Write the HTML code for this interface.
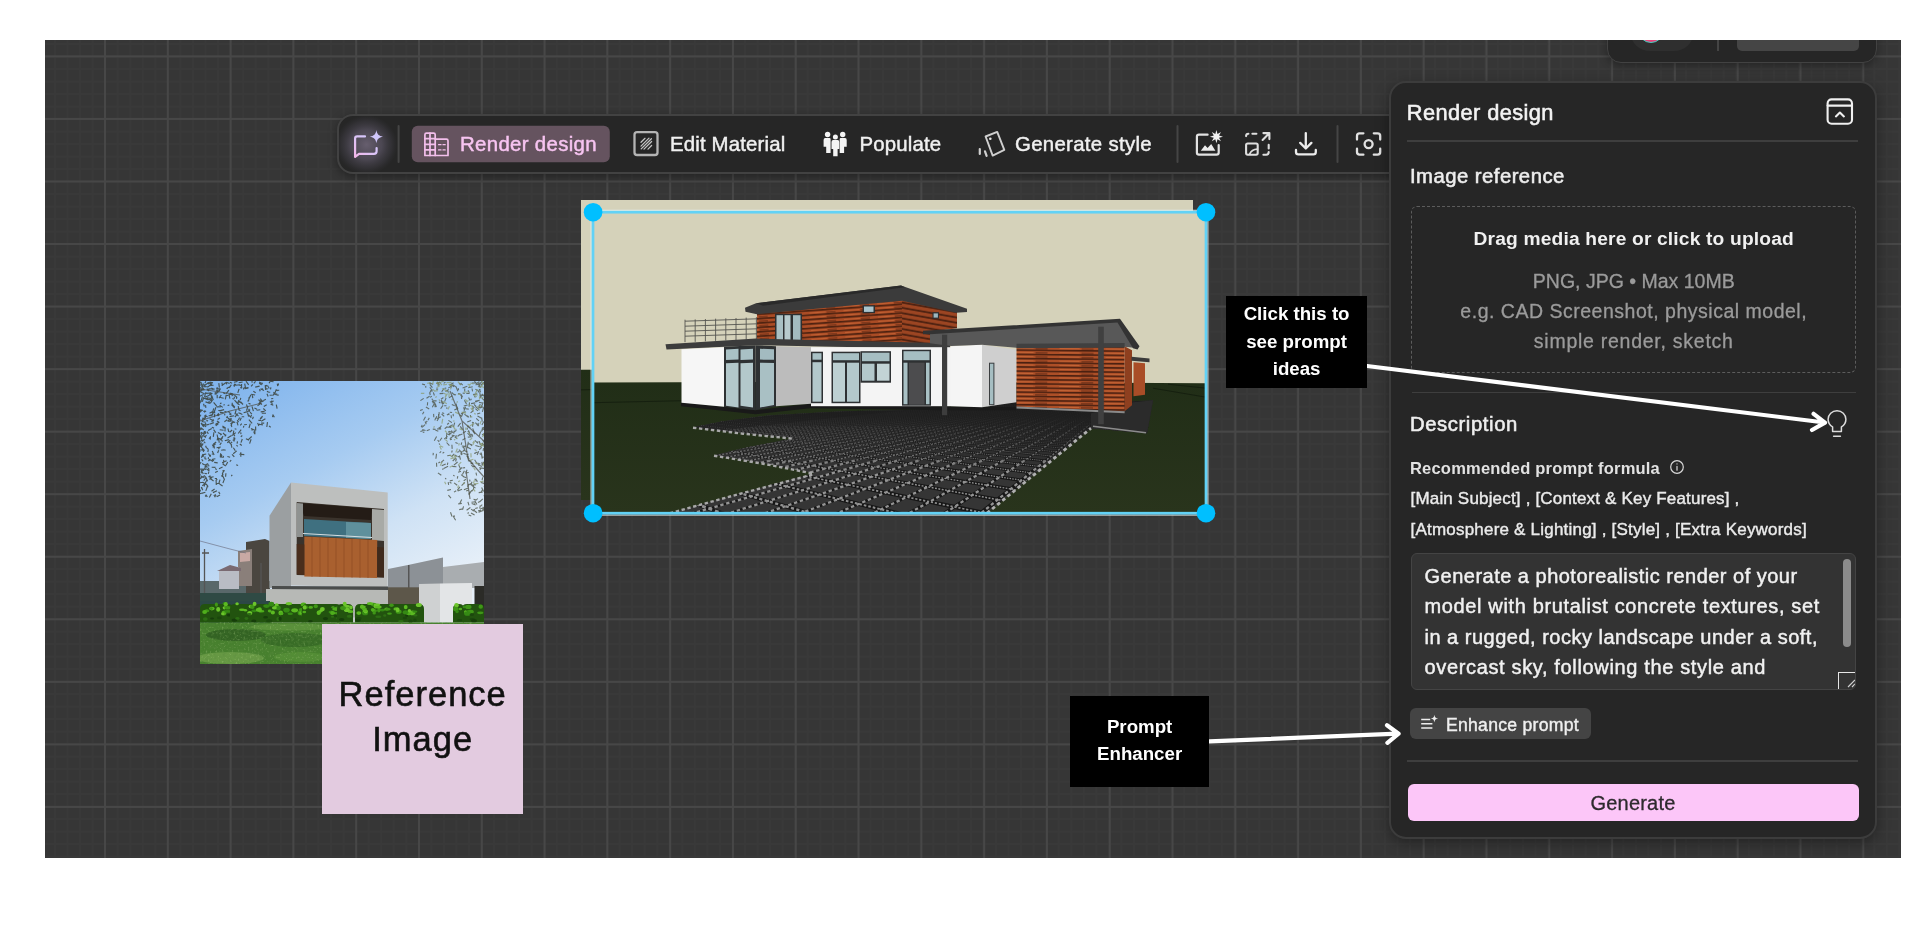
<!DOCTYPE html>
<html lang="en">
<head>
<meta charset="utf-8">
<title>Render design</title>
<style>
*{box-sizing:border-box;margin:0;padding:0}
html,body{width:1920px;height:936px;background:#fff;overflow:hidden}
body{font-family:"Liberation Sans",sans-serif;position:relative;color:#ececec}
#canvas{position:absolute;left:45px;top:40px;width:1856px;height:818px;background-color:#363636;overflow:hidden;opacity:.9999;
 background-image:
  linear-gradient(to right,#474747 0,#474747 2px,transparent 2px),
  linear-gradient(to bottom,#474747 0,#474747 2px,transparent 2px),
  linear-gradient(to right,#393939 0,#393939 1.6px,transparent 1.6px),
  linear-gradient(to bottom,#393939 0,#393939 1.6px,transparent 1.6px);
 background-size:62.8px 62.56px,62.8px 62.56px,12.56px 12.512px,12.56px 12.512px;
 background-position:59px 15.4px,59px 15.4px,59.2px 15.6px,59.2px 15.6px;}
.abs{position:absolute}
/* toolbar */
#toolbar{position:absolute;left:292px;top:73.5px;width:1100px;height:60px;background:#262626;border:2px solid #424242;border-radius:16px;box-shadow:0 3px 10px rgba(0,0,0,.35)}
.tlabel{position:absolute;font-size:20.4px;line-height:24px;white-space:nowrap;color:#f0f0f0;-webkit-text-stroke:.45px currentColor}
/* panel */
#panel{position:absolute;left:1344px;top:41px;width:488px;height:758px;background:#262626;border:2px solid #3c3c3c;border-radius:17px;box-shadow:0 4px 14px rgba(0,0,0,.35)}
.hr{position:absolute;height:1.5px;background:#3e3e3e}
.t{position:absolute;white-space:nowrap;line-height:1}
.med{-webkit-text-stroke:.4px currentColor}
.med2{-webkit-text-stroke:.55px currentColor}
.gr{left:20.5px;width:444.5px;text-align:center;font-size:19.5px;color:#9b9b9b;-webkit-text-stroke:.3px #9b9b9b}
.ta{left:13px;font-size:20px;color:#f1f1f1;-webkit-text-stroke:.45px #f1f1f1}
/* annotations */
.note{position:absolute;background:#000;color:#fff;font-weight:700;text-align:center;font-size:18.7px;line-height:27.2px}
#sticky{position:absolute;left:277.2px;top:584.1px;width:201px;height:189.8px;background:#e3cbe0;color:#111;text-align:center}
</style>
</head>
<body>
<div id="canvas">
  <!-- reference photo -->
  <svg id="photo" class="abs" style="left:155px;top:341px" width="284" height="283" viewBox="0 0 284 283">
<defs>
<linearGradient id="sky" x1="0.15" y1="0" x2="0.6" y2="0.85"><stop offset="0" stop-color="#82b5ed"/><stop offset=".4" stop-color="#a6cbf1"/><stop offset=".72" stop-color="#cfe2f5"/><stop offset="1" stop-color="#e6eff8"/></linearGradient>
<filter id="nz" x="0" y="0" width="100%" height="100%"><feTurbulence type="fractalNoise" baseFrequency=".35" numOctaves="2" seed="3"/><feColorMatrix values="0 0 0 0 0.1  0 0 0 0 0.25  0 0 0 0 0.05  0 0 0 -2.2 1.25"/></filter>
<filter id="nz2" x="0" y="0" width="100%" height="100%"><feTurbulence type="fractalNoise" baseFrequency=".5" numOctaves="2" seed="8"/><feColorMatrix values="0 0 0 0 0.75  0 0 0 0 0.95  0 0 0 0 0.45  0 0 0 -2.6 1.05"/></filter>
<clipPath id="phc"><rect width="284" height="283"/></clipPath>
</defs>
<g clip-path="url(#phc)">
<rect x="0.0" y="0.0" width="284.0" height="283.0" fill="url(#sky)"/>
<path d="M3.9 94.3l2.3 2.3 M24.1 68.8l1.5 0.5 M61.1 42.1l3.1 0.0 M49.0 19.6l-1.5 0.5 M0.3 55.1l0.8 2.1 M21.9 1.6l0.6 3.2 M9.0 19.8l0.3 2.5 M0.3 93.0l-0.9 1.9 M15.4 77.7l-2.9 0.6 M28.7 60.9l3.1 3.0 M21.3 14.0l-2.3 3.1 M18.3 42.8l-2.6 2.1 M19.7 48.8l3.9 0.5 M5.6 50.3l-2.5 2.2 M63.8 19.9l-3.5 0.5 M24.9 23.8l-1.5 0.2 M33.6 41.3l-3.2 1.4 M7.1 50.6l1.2 2.4 M31.6 65.2l0.2 1.6 M8.8 14.4l-3.9 1.8 M0.2 0.7l1.3 1.3 M39.5 32.0l2.9 1.6 M5.5 24.2l0.4 2.6 M26.1 1.3l0.5 2.1 M2.9 101.3l2.9 2.2 M59.1 1.1l3.6 1.8 M5.1 75.5l-0.3 2.2 M8.4 68.4l-0.6 2.6 M40.1 3.8l-4.5 0.5 M13.6 95.8l-4.0 0.8 M21.5 22.0l-1.5 0.6 M5.7 97.0l-2.0 2.6 M18.6 32.3l-1.6 2.6 M6.8 7.6l1.9 2.6 M14.8 97.5l2.2 0.1 M15.0 113.2l1.1 2.0 M16.1 99.0l0.2 4.9 M9.1 78.2l4.0 2.4 M7.9 82.6l-2.4 1.3 M15.9 26.2l-1.6 4.6 M66.9 10.4l1.5 0.5 M1.6 96.8l-2.3 1.4 M34.5 19.1l3.1 3.4 M11.7 86.3l3.8 0.1 M2.2 8.6l2.3 0.3 M5.5 20.9l4.4 1.5 M18.6 110.9l1.4 1.9 M26.4 7.3l1.5 0.2 M24.1 28.6l-4.7 1.3 M76.4 8.3l-1.8 4.6 M32.0 73.4l2.3 2.5 M13.6 21.4l3.1 3.8 M24.0 68.8l-2.8 0.5 M13.6 30.1l-4.1 2.1 M13.3 30.9l-0.9 3.5 M9.7 1.1l3.3 0.8 M1.5 5.1l2.6 3.4 M74.0 14.0l-4.4 0.2 M14.5 7.9l-2.4 0.6 M67.6 11.0l2.6 0.3 M6.0 42.1l-2.4 3.0 M10.2 4.3l-2.8 1.9 M19.9 31.4l3.8 0.3 M21.5 58.7l0.9 1.8 M3.5 22.7l0.9 2.8 M38.3 20.1l-0.3 3.2 M41.8 42.7l-1.6 1.7 M27.9 47.5l0.9 3.3 M41.6 3.0l-0.2 4.6 M5.1 83.5l2.2 3.3 M62.6 35.1l-2.4 2.6 M34.5 14.3l2.7 2.2 M52.8 3.3l-1.7 2.1 M29.6 13.2l4.9 0.6 M46.9 43.5l-2.8 0.3 M57.5 42.1l1.0 1.7 M37.2 39.2l1.4 1.9 M51.9 0.2l0.3 1.5 M39.8 63.0l2.0 1.5 M32.0 24.2l2.7 2.8 M32.2 49.0l-2.6 2.3 M19.0 25.4l-1.6 1.1 M51.7 55.5l-3.6 3.3 M4.0 50.1l1.8 2.7 M17.1 53.5l0.6 3.0 M13.5 38.2l-1.8 2.7 M41.7 35.7l2.5 0.0 M61.0 39.3l-2.6 0.1 M5.6 64.8l0.6 1.4 M19.4 41.3l-3.2 1.5 M27.7 80.9l-1.7 3.3 M20.8 66.0l-4.2 0.8 M37.7 32.6l-2.8 3.6 M32.1 12.0l0.2 3.1 M0.8 51.3l0.7 2.7 M42.6 1.0l-3.9 0.7 M20.4 73.5l1.8 1.4 M66.7 23.8l-2.9 1.7 M17.9 51.4l3.3 1.9 M38.1 19.9l3.7 2.2 M64.6 30.4l-3.9 0.5 M62.0 1.7l-1.0 2.4 M22.7 82.9l3.1 2.1 M5.4 111.3l-3.9 1.1 M37.8 23.0l1.8 0.8 M48.4 33.9l2.9 2.8 M48.7 27.7l1.0 3.1 M2.5 15.4l-1.4 4.4 M8.1 2.0l-4.1 2.7 M38.4 31.8l3.7 1.4 M2.4 38.3l0.8 1.9 M8.9 90.7l-0.6 2.2 M48.4 30.4l-4.8 1.4 M0.8 87.6l1.5 2.4 M69.9 0.8l-0.8 1.5 M18.7 9.9l-4.1 2.3 M0.5 4.0l2.4 0.3 M3.2 6.5l-1.7 3.7 M19.5 66.2l-1.0 2.1 M1.2 106.1l1.6 3.2 M33.5 52.7l1.3 2.6 M7.1 98.7l-2.0 3.5 M1.0 6.5l0.3 2.8 M78.2 2.4l0.3 1.9 M19.9 75.9l3.3 0.3 M2.2 88.0l2.8 0.3 M50.2 28.6l-3.5 2.6 M63.3 27.5l2.5 2.4 M15.2 31.4l-3.5 0.5 M2.7 68.9l-4.0 0.2 M5.0 34.9l2.6 0.8 M34.9 2.7l-1.2 2.3 M13.0 32.9l-2.3 2.3 M30.5 11.7l1.4 2.3 M1.4 112.2l-4.6 1.3 M30.3 59.3l-3.1 2.5 M51.6 33.9l-1.3 2.6 M5.5 11.6l-0.9 4.6 M6.3 39.6l1.8 0.3 M32.3 23.4l2.5 2.7 M30.6 5.4l-3.3 1.7 M5.8 96.2l1.8 4.1 M47.9 25.4l-1.4 4.3 M67.5 41.2l-0.7 4.8 M27.2 38.7l-2.8 2.1 M0.6 94.8l2.1 1.4 M46.0 0.2l2.7 3.7 M34.6 56.3l-0.6 4.3 M13.7 27.3l-0.9 3.3 M77.2 13.0l-4.1 0.1 M34.1 34.7l-4.5 0.9 M62.3 36.4l-2.2 1.7 M51.9 47.8l0.3 1.9 M16.9 40.0l2.1 1.2 M54.8 48.4l0.1 4.9 M48.5 6.5l-2.3 0.2 M0.3 22.1l-2.9 0.4 M31.3 32.3l-1.9 0.2 M32.9 40.6l2.3 0.9 M11.8 47.6l-3.8 1.8 M44.5 6.2l-1.3 2.2 M63.1 7.8l-2.1 0.6 M30.1 40.2l-2.5 0.1 M8.0 82.7l0.1 1.5 M76.3 23.6l0.8 4.1 M61.9 19.6l-1.8 2.3 M3.8 16.2l-1.5 4.6 M31.1 63.4l0.7 2.4 M46.4 23.6l1.3 2.9 M15.7 63.0l-3.7 1.4 M31.3 3.8l-2.1 3.1 M27.8 30.4l2.2 1.0 M2.1 54.8l-0.8 3.8 M8.6 16.6l-2.8 1.1 M0.0 1.1l-0.6 1.7 M8.5 72.5l1.7 3.2 M29.9 1.3l2.2 1.0 M1.7 78.2l1.3 2.1 M0.9 1.8l1.5 4.5 M40.8 21.0l2.2 2.5 M14.6 108.0l-3.1 2.2 M20.6 72.3l-0.3 3.5 M31.4 37.6l-1.4 3.1 M1.0 51.1l2.4 1.9 M32.3 21.8l-0.3 3.1 M20.5 7.6l-1.6 3.0 M32.2 93.8l-0.9 1.3 M13.7 72.7l-1.9 0.5 M65.9 18.3l-2.4 1.2 M67.0 12.7l1.1 2.8 M3.2 62.4l-2.2 3.7 M37.5 0.4l-3.6 0.9 M18.7 57.6l0.5 4.2 M37.0 40.9l1.0 3.5 M1.0 46.6l-0.9 1.2 M0.7 8.2l-0.1 2.7 M11.3 112.7l-2.0 3.8 M59.4 21.3l2.5 2.4 M17.1 12.6l-2.5 0.7 M66.0 32.2l-4.2 0.1 M1.1 42.3l2.6 3.5 M23.4 74.9l-0.1 1.7 M41.2 48.6l-3.0 3.9 M0.3 101.0l-1.8 1.1 M48.5 7.2l-3.8 0.4 M55.6 45.4l0.1 4.2 M49.2 16.0l-0.5 3.5 M18.5 8.0l2.1 0.5 M12.4 12.3l-4.1 2.5 M0.2 37.9l-3.2 3.5 M31.5 37.2l-4.0 2.9 M9.4 84.7l-2.1 0.3 M35.8 51.6l-3.8 2.9 M42.3 54.5l-1.5 1.2 M41.3 36.8l-1.4 2.9 M21.4 61.7l-1.6 2.1 M31.3 44.0l0.5 2.0 M19.9 37.0l-2.3 1.5 M4.7 58.2l-2.8 2.3 M50.0 31.1l1.9 2.0 M11.8 46.2l2.2 0.9 M7.0 88.2l2.4 1.8 M19.6 16.3l4.1 1.0 M1.1 81.0l-1.9 3.0 M3.7 54.7l2.1 1.9 M12.2 70.1l1.9 4.0 M8.5 76.2l-0.2 1.8 M60.2 17.6l2.7 3.4 M36.5 64.2l1.2 1.2 M60.3 28.8l-3.7 0.5 M2.7 95.2l1.6 1.6 M28.9 9.2l-2.7 3.5 M48.5 22.3l2.0 0.8 M53.4 35.8l-0.9 2.3 M40.8 71.3l-0.0 4.5 M11.3 7.1l3.2 1.4 M24.5 2.8l-2.9 1.8 M44.7 2.6l0.9 4.8 M36.7 15.7l-0.2 2.2 M17.3 98.3l-1.3 1.1 M69.0 45.1l1.7 1.1 M20.0 114.0l-3.3 1.8 M19.8 102.1l-3.4 0.7 M36.1 29.0l-1.2 4.3 M11.7 96.6l-2.2 1.9 M3.1 59.1l-2.6 0.8 M17.9 56.2l-0.8 3.1 M5.2 29.9l-1.9 0.6 M2.8 29.0l-4.2 2.7 M1.3 66.1l3.3 3.6 M32.7 59.0l2.0 0.5 M12.0 78.3l1.9 1.5 M26.6 79.8l-4.5 1.9 M59.6 5.1l-4.4 1.0 M3.9 43.2l-1.1 1.1 M14.2 81.4l3.5 0.5 M3.8 60.6l1.5 1.6 M1.0 109.8l-4.0 0.5 M8.2 105.8l-1.6 0.1 M10.2 56.4l-1.3 1.2 M59.1 2.1l2.0 1.5 M27.5 35.0l-1.0 1.9 M6.2 73.0l-2.9 0.6 M26.1 1.3l3.5 1.2 M47.6 31.9l1.0 3.8 M33.9 56.2l0.3 3.9 M25.9 92.2l-0.3 3.5 M13.8 62.9l0.6 4.6 M8.9 43.4l-3.8 0.9 M39.6 36.5l-1.2 2.5 M55.6 0.4l-1.8 1.9 M0.1 31.3l-3.6 2.8 M7.6 5.7l-3.8 0.1 M3.7 73.8l-0.8 2.2 M53.7 50.6l1.0 2.3 M21.8 53.2l-1.6 0.7 M7.1 106.4l-1.3 3.5 M9.6 37.7l4.4 2.3 M47.3 27.9l-0.8 1.4 M18.1 56.6l-0.1 2.6 M37.5 60.3l-0.4 2.4 M0.1 28.3l0.1 3.3 M8.9 7.5l-0.1 2.0 M0.0 4.1l-1.5 0.8 M0.1 54.6l1.5 0.1 M7.8 16.7l-0.4 2.3 M9.0 17.8l2.5 2.3 M24.4 30.6l2.1 0.1 M5.9 102.1l-3.7 2.7 M4.5 92.4l2.5 0.3 M16.2 61.0l-3.0 2.3 M3.3 16.9l4.5 1.7 M58.5 18.7l2.1 2.1 M9.9 1.9l2.2 1.6 M24.5 97.9l-1.6 4.2 M19.2 41.3l-3.9 2.3 M1.6 87.7l-0.5 4.7 M24.7 32.8l0.1 1.6 M3.6 13.5l-3.7 1.6 M4.6 45.0l1.6 0.7 M38.3 20.3l3.9 2.3 M13.8 41.6l-4.4 1.6 M6.5 54.2l-1.4 1.6 M17.0 109.8l-4.1 1.8 M16.0 9.1l2.4 0.3 M9.8 94.3l0.8 2.6 M0.9 107.0l1.8 0.0 M4.0 34.8l2.1 1.0 M13.9 51.3l-0.6 4.6 M31.9 42.0l-0.8 3.1 M29.3 33.3l2.2 0.5 M53.3 10.3l2.4 1.4 M0.9 33.8l-2.4 3.8 M2.1 67.8l1.7 3.1 M0.2 28.9l1.7 0.2 M17.8 57.2l2.6 0.6 M51.1 58.2l-1.5 4.4 M34.7 47.8l1.7 0.4 M6.1 30.1l-2.1 1.2 M13.6 48.6l2.2 3.0 M0.9 41.9l2.1 1.7 M42.3 58.0l-1.3 3.6 M14.7 32.8l-0.2 3.5 M65.4 37.8l-4.2 2.5 M9.6 78.9l-1.1 1.2 M28.9 58.6l-4.1 1.1 M33.8 49.7l-0.6 3.4 M51.1 13.3l4.0 0.7 M59.6 42.7l-1.3 2.2 M2.1 82.5l2.7 1.5 M76.4 14.0l2.3 0.1 M65.7 3.9l-0.1 5.0 M79.2 9.3l-2.7 0.1 M6.1 102.9l2.0 2.8 M22.4 45.1l3.1 1.9 M12.0 12.2l-1.9 0.1 M18.7 69.2l-1.1 2.8 M58.9 43.2l4.0 0.7 M2.4 36.9l2.6 1.7 M63.0 2.2l-3.1 0.2 M19.5 103.1l3.1 1.9 M6.1 84.8l-1.4 1.0 M71.5 19.7l0.8 4.5 M2.6 3.4l-3.1 0.7 M28.9 13.2l1.0 4.5 M51.0 47.4l4.4 2.2 M38.2 19.2l2.4 1.9 M65.7 7.6l2.0 0.3 M18.3 29.5l3.2 0.1 M23.8 80.2l-0.7 2.5 M52.3 14.1l0.5 3.1 M31.6 54.4l-4.1 2.5 M33.4 66.7l1.9 3.0 M25.2 48.2l-0.3 2.2 M9.5 16.7l3.0 2.9 M36.7 69.9l-3.5 2.8 M12.4 19.2l-2.2 3.1 M5.9 37.0l-3.6 0.5 M1.4 63.7l-1.6 2.0 M22.9 89.1l0.6 2.0 M31.2 79.2l-1.4 1.4 M23.1 55.2l-2.9 4.0 M73.2 17.5l-2.1 0.2 M76.2 9.0l1.8 0.8 M15.4 87.2l1.1 1.7 M17.2 14.1l0.0 3.2 M70.9 6.4l-0.4 2.0 M17.3 10.7l0.8 1.5 M26.2 53.6l-1.4 1.7 M69.3 0.2l4.3 0.6 M6.6 87.6l-1.4 1.2 M20.3 7.7l-3.3 0.1 M18.1 32.5l0.8 2.7 M32.5 17.3l1.2 1.1 M43.8 44.9l-0.4 1.7 M22.6 86.1l-3.6 1.7 M35.8 3.0l-1.9 2.8 M35.8 32.6l2.7 2.6 M23.1 11.7l2.3 1.0 M26.0 1.5l-4.0 2.9 M22.6 46.4l3.2 1.0 M32.2 39.5l-0.2 3.2 M50.3 42.7l-1.3 4.3 M18.0 6.9l-1.8 0.5 M42.3 6.2l-2.2 0.6 M13.6 63.7l-0.5 2.8 M0.7 61.7l-1.1 2.8 M11.2 14.1l0.5 3.5 M6.2 51.3l-2.8 2.6 M21.3 73.1l0.3 3.7 M13.6 4.2l-4.6 0.4 M60.2 22.8l-2.7 2.1 M13.3 7.9l-4.5 0.0 M23.8 78.8l-0.3 1.9 M39.3 4.3l2.4 0.1 M3.0 73.1l-1.6 3.6 M30.8 60.9l1.4 0.9 M3.2 2.6l2.4 3.5 M5.2 11.8l2.6 0.8 M45.9 57.7l3.2 1.4 M9.9 95.4l-1.5 0.3 M38.2 25.2l0.9 4.2 M6.4 83.8l-1.8 4.0 M22.5 94.5l2.1 4.2 M73.2 34.4l1.2 1.9 M10.5 73.8l-0.1 1.9 M0.0 28.4l-2.9 4.0 M18.8 2.1l0.6 4.5 M3.8 95.6l-3.7 1.4 M23.0 52.0l2.5 2.4 M6.0 33.6l-1.4 4.4 M22.8 56.6l-2.6 2.6 M73.5 11.0l2.2 2.9 M40.8 16.8l-0.7 2.3 M60.5 7.8l3.5 1.8 M0.3 70.0l-2.3 2.0 M52.0 25.4l1.4 4.7 M0.4 60.2l-3.6 3.3 M0.4 88.4l3.7 1.0 M68.4 5.9l0.8 1.5 M1.6 2.8l1.9 2.8 M5.7 65.8l2.6 2.6 M13.9 114.0l1.4 2.2 M0.0 47.8l-1.6 1.3 M9.5 12.9l1.7 1.2 M39.2 28.9l1.3 1.0 M8.0 86.7l1.3 1.9 M40.7 51.4l0.3 1.8 M1.5 19.8l-2.2 2.7 M0.1 108.5l-0.3 2.2 M9.6 18.1l-2.3 0.7 M16.5 25.8l4.2 0.1 M77.3 2.6l0.4 2.5 M9.8 97.3l3.8 2.7 M39.4 73.2l4.9 0.4 M0.4 19.4l-4.2 2.4 M0.1 10.7l4.3 2.0 M2.0 54.8l2.5 0.1 M10.5 55.2l-0.3 3.4 M11.8 14.7l1.5 4.4 M7.6 1.4l1.2 1.9 M20.0 98.7l-1.3 4.2 M65.9 4.3l2.7 1.2 M19.5 24.1l3.3 2.3 M34.4 15.7l-0.2 2.1 M2.1 47.7l-4.0 2.2 M0.1 88.1l3.5 0.4 M26.2 14.2l-0.9 4.2 M65.2 4.2l0.3 3.3 M17.8 90.2l-2.7 1.4 M73.1 33.3l-0.6 2.8 M39.1 7.8l-1.3 4.1 M1.7 40.5l4.1 0.8 M36.2 83.7l1.9 0.8 M27.4 36.4l1.7 1.8 M0.3 5.9l-1.1 2.0 M50.9 13.8l-1.8 3.8 M24.4 89.1l-2.2 3.8 M33.8 57.7l1.6 0.2 M0.6 28.3l-1.4 3.6 M0.2 97.8l-2.7 0.3 M29.3 37.6l2.2 1.9 M5.8 0.2l-0.8 1.9 M61.3 18.9l-2.5 4.2 M23.2 93.1l-1.8 2.3 M29.3 24.1l-1.7 0.4 M22.6 92.7l-0.1 3.3 M5.7 113.7l1.7 2.1 M12.3 33.6l-3.7 1.4 M8.6 1.1l3.1 3.4 M5.1 114.5l1.1 1.1 M59.5 8.2l0.7 2.0 M2.3 56.0l-1.3 1.1 M0.9 46.8l2.8 2.2 M2.9 101.2l-2.8 0.6 M1.9 90.3l1.4 2.7 M11.0 11.9l-4.9 0.6 M1.4 61.4l-1.2 4.8 M4.4 77.4l2.1 0.8 M73.7 20.0l-3.8 1.1 M54.4 27.0l2.6 1.2 M27.4 75.5l2.7 0.7 M4.9 102.6l-0.8 2.9 M1.8 63.7l-3.3 0.9 M25.8 14.3l2.5 0.2 M48.9 38.6l3.2 3.7 M70.6 23.3l2.7 0.9 M9.5 78.4l-0.9 1.3" stroke="#39423a" stroke-width="1.15" fill="none" opacity=".85"/>
<path d="M282.5 108.8l-1.3 2.2 M254.8 74.1l2.6 1.4 M268.7 91.5l-3.4 0.5 M265.6 27.8l3.1 0.3 M272.9 42.3l-0.3 3.5 M276.9 1.5l3.0 1.4 M271.0 131.9l3.6 2.0 M246.5 53.4l0.1 4.7 M262.0 108.2l-4.3 1.7 M264.6 68.4l-2.1 2.4 M277.5 35.0l4.1 2.3 M275.4 120.8l-3.9 0.5 M261.8 61.3l-0.7 2.5 M278.1 60.4l-0.7 1.6 M237.9 91.9l3.4 2.3 M283.1 80.9l3.5 3.0 M281.9 61.9l1.6 1.6 M232.8 48.1l2.8 0.3 M279.6 83.9l-1.6 0.2 M245.4 1.3l-1.7 1.1 M279.1 86.7l4.9 0.7 M280.3 2.5l-1.5 3.8 M281.6 36.6l0.7 4.1 M277.4 82.1l2.9 1.0 M233.3 11.4l1.1 3.1 M280.6 128.5l-1.0 2.8 M283.8 67.0l1.6 0.3 M280.0 8.1l-0.1 4.9 M265.6 25.7l-1.6 4.0 M246.9 26.4l-0.1 1.5 M283.6 46.1l-1.5 1.8 M282.0 17.4l2.6 2.1 M264.4 33.1l3.7 2.9 M261.3 70.4l0.9 3.2 M279.2 7.9l1.4 3.0 M248.8 8.6l-3.4 1.9 M283.9 52.0l0.1 2.2 M256.0 5.9l1.9 4.4 M282.7 96.4l-0.6 2.8 M264.5 96.1l1.8 0.7 M282.6 111.1l-3.9 0.5 M283.8 81.9l-2.1 2.5 M270.7 52.8l2.2 2.5 M263.5 127.7l-4.3 0.9 M274.0 23.3l2.1 2.2 M238.1 8.1l-2.0 0.0 M267.3 5.3l-4.7 1.6 M251.7 11.5l2.9 2.6 M249.1 50.2l3.2 1.2 M261.0 90.3l-2.9 1.0 M247.4 45.5l-2.7 2.2 M280.6 50.6l-1.4 4.4 M279.2 60.2l1.2 3.8 M225.5 35.8l-2.0 3.7 M235.2 22.5l1.2 3.7 M264.4 89.7l-2.0 3.9 M283.9 125.9l-1.5 4.4 M232.4 8.6l-1.6 1.5 M244.2 71.1l-1.6 1.1 M254.3 49.6l-0.6 3.1 M278.2 129.6l3.2 0.0 M236.5 81.8l0.2 3.9 M272.0 27.7l1.8 0.2 M243.4 16.5l-2.3 1.8 M249.6 101.3l1.9 0.9 M269.4 53.8l3.4 0.1 M225.1 40.5l1.1 2.8 M233.6 32.9l0.2 3.4 M229.8 6.2l2.2 3.1 M240.0 81.0l-1.6 0.9 M252.8 43.8l-3.8 1.9 M253.1 32.9l0.3 2.3 M274.9 128.2l-2.4 1.5 M270.4 34.2l0.3 2.1 M265.8 30.8l-3.0 0.7 M282.1 24.1l-1.5 2.4 M270.8 102.5l-3.1 2.1 M268.3 106.9l-4.4 1.8 M261.9 86.5l-2.9 3.0 M223.9 30.8l-1.4 2.4 M268.6 16.6l1.4 2.8 M231.6 18.0l1.5 0.6 M271.1 39.5l-3.9 1.5 M266.1 64.8l-2.5 1.4 M274.6 78.7l2.6 4.0 M282.2 13.0l2.1 2.1 M276.2 37.3l2.7 2.5 M271.9 41.3l2.0 0.4 M235.3 49.0l3.0 1.3 M235.8 36.7l-1.0 2.7 M222.2 43.9l-1.0 2.4 M236.5 72.8l-0.6 4.9 M267.6 62.3l4.7 1.7 M281.2 124.9l-1.7 0.5 M273.5 103.0l2.6 0.9 M279.5 13.5l4.7 1.4 M251.6 3.7l2.3 2.2 M258.1 12.6l2.2 0.4 M262.6 11.9l2.1 0.7 M283.2 21.4l-1.7 4.2 M229.6 15.3l-3.1 2.0 M278.0 41.9l0.6 2.9 M268.4 102.9l-0.6 3.1 M274.6 97.9l3.0 2.6 M247.8 81.7l-0.4 2.2 M278.7 70.2l-1.6 3.8 M247.5 55.3l-3.3 2.9 M278.6 9.4l-0.3 2.1 M264.4 30.8l-3.4 2.1 M274.9 119.4l0.8 2.8 M246.1 52.5l3.7 1.5 M275.2 120.6l1.7 2.9 M268.8 62.4l3.4 2.5 M248.2 101.2l0.4 2.7 M263.8 26.1l0.2 2.2 M264.1 69.2l3.1 1.8 M234.5 22.2l-2.2 4.0 M249.1 32.8l-2.2 1.2 M283.9 114.3l1.4 2.2 M276.0 91.6l0.6 2.9 M236.8 1.1l1.9 0.8 M254.7 41.7l-1.3 4.5 M251.9 58.1l-2.0 0.5 M273.8 129.3l3.2 2.4 M233.3 71.9l-0.2 2.3 M277.9 4.8l3.3 1.5 M268.8 49.9l1.1 3.0 M269.5 21.4l-0.4 4.3 M282.3 126.2l3.9 0.7 M268.2 60.8l-0.1 3.3 M241.1 70.3l-1.5 1.7 M283.8 55.7l2.4 1.1 M259.6 75.4l-1.8 0.3 M258.2 7.2l0.4 2.0 M273.3 82.1l-2.7 0.5 M271.7 122.6l4.0 1.4 M270.4 126.5l-3.8 2.7 M271.7 109.2l-2.6 4.3 M259.4 74.5l1.1 4.1 M279.9 3.3l-4.4 0.5 M249.8 31.2l2.3 0.3 M230.3 9.6l2.3 0.5 M278.9 0.3l-0.0 2.5 M251.4 3.9l-0.3 2.9 M229.8 11.3l0.4 2.8 M265.9 50.1l-3.0 2.2 M279.9 72.3l0.7 1.4 M257.3 25.6l0.3 3.0 M275.3 21.9l-4.3 0.7 M253.6 1.8l-4.3 2.4 M258.9 68.6l2.8 2.8 M270.3 110.6l-1.7 3.0 M259.8 53.3l-2.1 2.1 M261.7 118.6l-2.2 4.3 M281.5 72.8l0.7 4.8 M225.0 43.7l-2.9 2.6 M270.5 103.0l3.4 1.7 M251.6 46.1l-4.3 0.2 M267.9 120.8l1.1 3.6 M250.2 45.1l0.3 1.9 M227.3 39.9l-1.4 1.6 M236.8 35.1l-0.9 2.8 M283.8 2.0l-1.0 1.3 M272.3 55.7l-4.5 0.4 M252.3 69.5l-0.7 2.0 M273.6 108.0l-2.0 2.4 M274.8 59.3l3.2 3.1 M223.7 17.4l-3.3 2.2 M277.4 71.1l-3.2 1.5 M261.4 15.2l0.2 2.8 M279.3 19.4l-4.3 1.0 M254.1 101.9l3.1 2.4 M284.0 6.9l1.7 1.2 M268.6 109.0l-2.4 1.0 M257.2 54.9l-2.1 0.3 M225.7 4.9l0.1 1.8 M239.0 62.5l1.0 1.2 M231.9 20.6l3.3 1.4 M264.4 19.3l2.1 3.7 M280.3 22.9l-1.8 3.9 M229.1 1.9l4.0 1.3 M261.8 122.4l-3.6 0.5 M271.1 128.1l2.8 2.0 M283.8 1.0l-2.9 3.5 M243.5 12.4l-3.9 0.2 M263.3 31.2l-1.9 4.5 M281.6 106.5l2.0 4.0 M280.2 31.9l-3.1 1.2 M282.3 123.7l-1.8 1.5 M272.0 7.5l0.6 2.9 M251.0 108.5l-3.7 0.9 M271.4 17.8l-0.8 1.5 M248.9 42.0l-1.7 1.5 M275.4 64.5l4.3 1.2 M246.1 16.9l-1.5 3.7 M259.6 33.6l2.3 2.1 M268.0 9.2l1.4 2.5 M257.8 95.1l-0.5 2.6 M277.3 12.7l-4.3 0.9 M279.6 14.0l1.8 2.4 M284.0 48.0l-1.9 1.1 M284.0 102.5l1.1 1.7 M275.4 27.6l2.5 2.2 M238.5 33.0l0.2 4.4 M239.2 31.1l-0.3 3.5 M272.7 5.7l-4.5 1.0 M264.7 7.5l-0.0 3.1 M252.3 14.7l-3.4 2.2 M223.5 49.5l-3.1 1.1 M231.8 15.3l-1.7 1.1 M261.1 93.6l3.3 2.7 M283.5 67.6l-0.4 2.5 M237.6 59.0l1.6 1.9 M283.7 76.1l-1.6 0.5 M241.0 19.0l2.9 3.9 M251.8 54.2l2.8 0.4 M224.4 51.0l-1.6 0.6 M272.7 47.4l1.4 3.6 M280.9 87.1l-1.0 1.9 M240.5 47.6l-3.5 0.4 M283.8 40.4l-1.9 3.7 M263.6 125.4l-1.2 3.3 M281.9 0.4l-2.9 3.4 M283.7 26.2l-1.3 4.6 M231.2 9.2l-1.9 3.3 M267.6 23.9l-3.8 1.2 M259.1 2.2l1.7 1.6 M277.8 83.2l4.0 2.4 M284.0 127.8l-1.1 2.2 M281.0 101.4l3.0 1.0 M279.0 21.2l4.2 1.1 M257.6 81.0l-3.7 3.2 M222.0 3.0l3.0 0.9 M250.9 74.3l-3.7 0.4 M222.3 48.4l3.2 1.0 M251.8 23.5l2.9 1.3 M254.7 55.9l2.3 1.6 M251.4 49.4l1.3 2.3 M280.8 71.5l0.8 1.3 M229.8 3.3l2.6 3.4 M236.3 2.2l3.3 1.2 M255.6 77.1l-2.9 2.9 M279.5 120.6l-1.5 0.9 M246.6 61.5l2.8 3.1 M244.8 7.1l1.5 0.1 M281.9 80.9l0.4 3.7 M256.2 109.7l-2.2 1.4 M282.8 117.9l-3.3 3.1 M279.7 18.9l-4.0 2.1 M222.7 28.4l-2.6 1.1 M256.1 22.5l0.6 3.2 M251.1 34.3l0.4 3.0 M245.7 83.0l-4.0 1.7 M267.9 79.6l3.7 0.7 M260.2 45.4l2.5 3.2 M248.4 114.1l2.6 3.0 M268.9 49.4l-1.0 1.7 M252.2 4.6l-4.0 2.5 M276.1 97.8l0.0 2.7 M282.5 49.5l-1.7 0.8 M274.4 0.2l2.9 3.2 M227.6 21.3l-0.2 3.2 M267.8 62.8l-0.4 4.4 M282.1 53.3l1.8 1.1 M254.0 13.3l2.0 0.8 M272.0 100.7l-1.2 3.5 M268.5 131.2l-0.7 1.6 M276.3 71.1l-1.0 1.4 M239.0 21.0l1.4 1.0 M241.9 56.8l-2.1 2.9 M267.3 34.6l1.7 1.7 M238.7 37.3l-1.7 2.6 M240.8 35.7l-3.7 1.9 M266.7 75.0l2.6 3.2 M225.9 26.1l3.3 1.8 M277.8 126.7l-2.6 0.9 M229.3 36.9l-1.3 2.2 M262.7 65.9l2.4 2.6 M260.8 71.4l0.6 2.8 M268.6 134.1l2.7 0.9 M267.5 52.0l3.1 3.5 M238.5 1.2l-0.4 3.7 M232.2 19.8l4.4 0.1 M275.7 1.7l-3.8 0.3 M241.4 44.6l-2.1 3.8 M275.4 41.7l3.1 3.4 M284.0 1.4l-2.7 2.2 M243.1 87.4l-0.4 1.5 M282.0 46.6l1.4 2.0 M267.1 46.7l0.3 2.0 M259.9 105.8l-2.6 3.5 M229.8 48.6l-3.1 1.1 M275.2 85.5l-2.8 0.1 M275.5 25.6l3.7 3.0 M252.7 3.7l4.1 2.7 M271.6 104.3l3.9 2.8 M282.7 58.9l2.0 3.6 M235.0 23.1l0.1 3.2 M252.8 99.3l-3.0 0.6 M283.7 47.9l3.8 2.5 M255.4 61.6l2.3 1.0 M252.2 85.4l4.2 0.4 M248.1 85.3l-4.4 2.2 M256.4 49.3l-3.1 2.3 M241.6 33.0l2.6 2.4 M283.9 63.6l-3.1 0.9 M233.5 19.6l-0.4 2.7 M268.6 73.0l-2.4 1.1 M256.4 77.5l-0.8 3.0 M238.9 1.2l1.8 1.1 M249.9 52.4l1.6 0.4 M275.4 8.1l2.3 1.7 M267.1 88.7l-0.9 2.1 M280.8 67.2l-1.5 1.7 M248.4 39.4l3.5 2.2 M261.8 65.0l3.4 0.3 M272.3 24.8l2.1 2.0 M266.3 12.5l3.3 0.0 M253.1 135.0l2.5 4.2 M281.9 13.7l-1.9 3.0 M283.6 46.0l1.5 3.9 M244.2 7.2l-2.5 3.5 M250.5 131.3l1.5 4.2 M254.3 72.8l-2.8 2.8 M264.8 101.3l-3.2 3.4 M260.1 13.6l1.8 1.4 M283.4 47.6l-1.8 1.1 M269.6 98.6l0.5 1.9 M242.1 31.7l2.1 0.8 M247.5 10.2l1.2 1.1 M245.3 96.9l0.8 1.4 M246.5 24.7l-2.3 0.1 M248.6 50.1l1.2 3.8 M260.7 2.2l2.0 1.9 M263.4 72.3l2.6 1.0 M253.7 54.7l-3.9 2.9 M251.9 63.7l0.3 4.2 M273.0 50.1l2.1 3.0 M274.0 122.4l1.0 1.4 M283.8 105.4l1.5 0.6 M241.2 20.3l1.6 3.3 M271.3 81.3l1.3 1.4 M283.0 67.7l4.6 0.1 M274.5 15.0l0.8 1.6 M262.4 53.0l-3.3 1.3 M243.0 24.4l-2.4 3.4 M279.0 126.8l4.6 1.2 M273.5 118.3l3.2 0.7 M258.8 84.1l1.7 3.8 M261.1 13.3l1.5 3.0 M280.1 25.9l-0.8 1.4 M267.3 45.2l3.1 1.2 M238.8 46.1l2.3 2.3 M273.5 29.5l-2.9 2.4 M236.6 55.5l-2.3 4.2 M258.2 27.2l-3.9 1.9 M253.2 94.3l1.4 0.6 M265.3 57.3l-2.9 1.8 M244.0 78.8l-3.2 2.8 M273.9 104.0l-0.5 4.7 M277.7 117.5l-1.3 1.5 M283.3 25.7l-3.3 1.2 M260.6 42.2l-2.8 3.5 M271.4 84.1l1.2 1.2 M268.0 74.5l0.7 4.1 M265.1 86.6l-2.6 0.4 M265.8 98.3l-2.1 1.6 M280.3 65.3l1.4 2.0 M267.1 65.9l3.8 2.2 M249.1 32.4l-0.3 1.7 M254.1 134.2l0.2 1.9 M259.5 70.4l-2.3 0.9 M281.9 130.0l-3.4 1.3" stroke="#4f5648" stroke-width="1.1" fill="none" opacity=".8"/>
<path d="M254.5 76.9l-4.0 0.7 M230.9 1.6l-3.7 0.7 M232.7 8.1l2.4 2.4 M257.9 0.6l3.0 3.6 M243.8 12.2l3.3 1.5 M281.3 0.1l1.8 1.4 M278.4 102.3l-4.6 0.5 M274.2 32.4l1.6 0.8 M274.1 60.0l-1.4 2.3 M273.6 86.5l1.7 2.7 M248.5 3.5l4.1 0.3 M237.4 0.9l1.4 3.2 M283.9 2.8l-2.2 0.3 M244.6 100.8l1.3 2.4 M261.2 81.1l-3.0 3.0 M236.2 2.1l2.6 0.8 M273.3 13.8l3.5 1.8 M224.3 12.3l-3.4 0.1 M268.5 19.6l-2.6 1.6 M267.6 3.4l3.2 0.3 M237.9 9.6l-3.7 0.6 M242.0 7.5l4.0 2.0 M274.4 42.5l-4.4 2.2 M265.7 46.5l0.2 2.5 M268.6 11.0l-4.9 0.2 M254.2 47.8l2.4 0.7 M242.2 81.0l-2.0 3.6 M270.9 72.2l0.2 4.2 M249.5 25.3l-1.6 3.1 M283.9 53.3l-1.6 2.7 M239.7 65.3l1.7 3.3 M260.9 12.8l-3.1 0.6 M249.5 74.1l3.6 2.2 M257.4 67.5l-1.6 3.9 M253.5 74.2l2.7 1.5 M252.5 17.8l-0.7 1.5 M264.6 18.5l2.4 1.1 M279.4 15.3l0.3 2.8 M255.3 58.4l-1.4 0.4 M268.5 23.7l4.1 1.6 M270.3 2.0l3.3 1.0 M272.1 57.3l-2.5 1.6 M240.0 64.7l3.2 1.5 M258.6 104.4l-0.9 2.6 M233.3 0.0l-0.7 3.6 M280.8 63.1l1.1 2.8 M277.5 25.1l1.8 4.5 M273.2 107.9l2.0 2.5 M281.4 62.2l2.6 3.4 M238.9 0.6l3.1 3.6 M242.5 20.4l4.4 2.3 M274.5 60.5l-1.6 3.2 M245.5 8.5l2.0 2.7 M272.3 25.6l0.3 2.7 M245.4 58.5l2.2 2.2 M283.9 81.4l-0.9 3.9 M253.8 45.8l1.0 2.7 M236.8 15.6l-1.5 0.9 M274.8 81.7l2.9 1.4 M259.6 47.6l3.1 1.6 M240.1 4.4l-3.6 2.3 M251.6 1.3l-5.0 0.3 M248.8 2.9l2.9 2.4 M274.5 99.3l-1.0 2.8 M280.1 62.3l2.7 0.9 M282.8 3.6l-3.2 3.3 M281.0 40.1l-1.0 3.1 M249.1 11.4l-0.1 4.7 M259.2 62.1l-0.4 2.4 M245.0 49.8l2.1 1.9 M246.1 14.0l-0.8 1.6 M251.2 6.2l-0.7 2.2 M234.7 45.6l-1.3 1.0 M247.0 3.3l-3.8 0.6 M277.7 8.3l-2.2 3.8 M280.9 62.6l2.0 1.8 M255.1 31.1l4.0 1.8 M252.7 84.7l-3.0 1.5 M256.6 56.4l0.6 1.7 M283.6 16.2l-3.0 1.1 M244.2 0.0l-3.5 1.2 M267.2 44.0l1.8 1.0 M270.2 35.1l2.1 1.1 M275.2 12.3l2.4 2.1 M283.7 100.1l-3.8 0.8 M250.8 44.7l3.6 1.4 M274.6 68.6l1.9 1.1 M283.8 18.9l1.5 4.7 M270.8 27.2l2.6 3.2 M247.5 12.5l-2.5 4.1 M252.9 40.0l1.7 0.0 M242.7 37.8l-0.8 4.9 M261.6 31.2l4.5 1.0 M263.3 101.6l1.2 1.2 M269.0 3.8l0.7 2.5 M283.3 2.1l2.8 1.8 M268.7 51.5l1.0 1.6 M260.1 99.7l-2.0 1.0 M283.9 52.5l-0.6 2.7 M254.3 74.9l1.7 2.5 M238.9 18.3l1.0 1.5 M281.2 5.5l2.9 0.8 M257.7 20.4l-1.0 1.3 M278.6 24.5l2.8 0.9 M273.4 78.2l-3.6 1.2" stroke="#8a9a6a" stroke-width="1.2" fill="none" opacity=".7"/>
<path d="M0 40L30 30L62 22M0 8L40 14M284 60L262 40L250 10M284 96L268 78L262 40M270 118L266 90" stroke="#4a4a40" stroke-width="1.2" fill="none" opacity=".7"/>
<rect x="0.0" y="200.0" width="70.0" height="22.0" fill="#59686a"/>
<polygon points="46.0,161.0 65.0,158.0 69.5,160.0 69.5,212.0 46.0,212.0" fill="#4a4640"/>
<polygon points="38.0,170.0 52.0,168.0 52.0,205.0 38.0,205.0" fill="#8a7f7a"/>
<polygon points="40.0,172.0 50.0,171.0 50.0,180.0 40.0,181.0" fill="#c9a9a4"/>
<polygon points="19.0,190.0 39.0,186.0 39.0,208.0 19.0,208.0" fill="#b9bcc4"/>
<polygon points="17.0,190.0 30.0,184.0 41.0,187.0 41.0,190.0" fill="#7a6a72"/>
<path d="M4.5 168V214M2 172H9M61 182V212" stroke="#555" stroke-width="1.3" fill="none"/><path d="M0 160L30 168L46 172" stroke="#667" stroke-width=".6" fill="none"/>
<rect x="0.0" y="212.0" width="70.0" height="10.0" fill="#2f4a44"/>
<polygon points="188.0,188.0 208.0,184.0 243.0,176.5 243.0,206.0 188.0,210.0" fill="#8c9196"/>
<polygon points="243.0,186.0 284.0,181.0 284.0,207.0 243.0,207.0" fill="#a9adb0"/>
<polygon points="208.0,184.0 209.5,184.0 209.5,208.0 208.0,208.0" fill="#555"/>
<rect x="186.4" y="206.3" width="33.0" height="24.0" fill="#5d574a"/>
<polygon points="69.5,134.7 91.0,101.6 91.0,206.0 69.5,207.0" fill="#9b9fa1"/>
<polygon points="91.0,101.6 187.7,111.6 187.7,206.5 91.0,204.5" fill="#bdbfbe"/>
<polygon points="96.7,121.0 184.0,128.0 184.0,196.5 96.7,194.0" fill="#3a332c"/>
<polygon points="100.0,122.0 172.0,127.5 171.0,139.0 104.0,135.0" fill="#241c16"/>
<polygon points="104.0,138.0 171.0,142.0 171.0,158.0 104.0,155.0" fill="#3f7080"/>
<polygon points="146.0,141.0 171.0,142.0 171.0,158.0 146.0,157.0" fill="#5f909c"/>
<polygon points="172.0,128.0 184.0,129.0 184.0,160.0 172.0,159.0" fill="#a8aaa6"/>
<polygon points="97.0,122.0 103.0,122.5 103.0,156.0 97.0,156.0" fill="#8f9290"/>
<polygon points="104.3,155.4 177.2,159.0 177.2,197.0 104.3,195.5" fill="#a9602f"/>
<path d="M112 156V196M120 156.4V196M128 156.8V196M136 157.2V196.2M144 157.6V196.4M152 158V196.6M160 158.4V196.8M168 158.8V197" stroke="#8c4a22" stroke-width=".7" fill="none"/>
<polygon points="96.7,163.0 104.3,163.4 104.3,194.0 96.7,193.6" fill="#4a2e1c"/>
<polygon points="177.2,166.0 184.0,166.4 184.0,196.5 177.2,196.2" fill="#3f2a1c"/>
<path d="M103 152.5L172 156.5" stroke="#d5dde0" stroke-width="1" fill="none"/>
<polygon points="72.0,205.0 188.0,205.5 188.0,209.5 72.0,209.0" fill="#4a4c4b"/>
<polygon points="66.0,208.0 188.0,209.0 188.0,229.0 66.0,227.0" fill="#b7b9b6"/>
<rect x="0.0" y="220.0" width="70.0" height="22.0" fill="#2c4846"/>
<rect x="70.0" y="227.0" width="150.0" height="15.0" fill="#a9aeaa"/>
<rect x="140.0" y="236.5" width="144.0" height="5.0" fill="#c3cac9"/>
<polygon points="219.0,203.0 240.0,202.5 240.0,241.0 219.0,241.0" fill="#cfd1d2"/>
<polygon points="240.0,202.5 272.0,202.0 272.0,241.0 240.0,241.0" fill="#e3e5e7"/>
<rect x="274.5" y="205.0" width="9.5" height="23.0" fill="#2b2b27"/>
<path d="M0 241.5V228Q0 223 5 223H28Q33 223 33 228V241.5Z" fill="#22530f"/>
<ellipse cx="6.8" cy="229.7" rx="2.5" ry="1.5" fill="#3f9617"/>
<ellipse cx="25.0" cy="231.0" rx="1.9" ry="1.8" fill="#358a14"/>
<ellipse cx="24.9" cy="222.6" rx="2.4" ry="1.4" fill="#358a14"/>
<ellipse cx="23.8" cy="232.2" rx="2.4" ry="2.4" fill="#4fae1c"/>
<ellipse cx="24.4" cy="226.8" rx="1.7" ry="1.6" fill="#6cc52c"/>
<ellipse cx="16.4" cy="223.7" rx="1.6" ry="2.1" fill="#3f9617"/>
<ellipse cx="4.6" cy="231.0" rx="2.4" ry="1.9" fill="#4fae1c"/>
<ellipse cx="11.9" cy="227.6" rx="2.8" ry="1.8" fill="#5cba22"/>
<ellipse cx="25.8" cy="223.3" rx="2.0" ry="2.4" fill="#5cba22"/>
<ellipse cx="27.9" cy="230.4" rx="3.4" ry="1.3" fill="#358a14"/>
<ellipse cx="18.2" cy="228.4" rx="2.0" ry="2.3" fill="#6cc52c"/>
<ellipse cx="27.7" cy="226.8" rx="3.3" ry="1.8" fill="#3f9617"/>
<ellipse cx="11.2" cy="227.6" rx="1.6" ry="1.3" fill="#3f9617"/>
<ellipse cx="22.8" cy="232.9" rx="1.6" ry="1.3" fill="#6cc52c"/>
<ellipse cx="19.4" cy="236.9" rx="2.4" ry="1.3" fill="#1b470d"/>
<ellipse cx="5.3" cy="238.0" rx="2.4" ry="1.8" fill="#2d6e14"/>
<ellipse cx="12.1" cy="237.5" rx="2.0" ry="1.1" fill="#163d0b"/>
<ellipse cx="28.8" cy="234.3" rx="2.1" ry="1.2" fill="#163d0b"/>
<path d="M30 241.5V228Q30 223 35 223H101Q106 223 106 228V241.5Z" fill="#22530f"/>
<ellipse cx="80.7" cy="231.9" rx="2.3" ry="2.4" fill="#5cba22"/>
<ellipse cx="101.2" cy="228.7" rx="2.5" ry="1.7" fill="#3f9617"/>
<ellipse cx="49.8" cy="231.7" rx="2.6" ry="1.7" fill="#5cba22"/>
<ellipse cx="61.3" cy="230.3" rx="3.1" ry="1.3" fill="#4fae1c"/>
<ellipse cx="50.6" cy="225.5" rx="2.0" ry="1.7" fill="#6cc52c"/>
<ellipse cx="94.7" cy="229.3" rx="3.4" ry="2.1" fill="#5cba22"/>
<ellipse cx="66.5" cy="225.1" rx="3.2" ry="1.8" fill="#358a14"/>
<ellipse cx="100.6" cy="231.9" rx="3.0" ry="2.3" fill="#3f9617"/>
<ellipse cx="75.3" cy="227.0" rx="3.2" ry="1.8" fill="#358a14"/>
<ellipse cx="42.0" cy="228.7" rx="3.0" ry="1.2" fill="#5cba22"/>
<ellipse cx="81.3" cy="232.5" rx="2.1" ry="1.6" fill="#4fae1c"/>
<ellipse cx="50.0" cy="232.5" rx="2.1" ry="1.7" fill="#6cc52c"/>
<ellipse cx="101.0" cy="232.0" rx="1.9" ry="1.7" fill="#5cba22"/>
<ellipse cx="45.4" cy="229.2" rx="1.7" ry="1.3" fill="#5cba22"/>
<ellipse cx="52.3" cy="225.7" rx="2.3" ry="2.3" fill="#3f9617"/>
<ellipse cx="76.7" cy="224.4" rx="2.0" ry="2.1" fill="#6cc52c"/>
<ellipse cx="86.5" cy="228.8" rx="3.2" ry="2.1" fill="#358a14"/>
<ellipse cx="88.9" cy="222.6" rx="3.2" ry="1.7" fill="#6cc52c"/>
<ellipse cx="72.8" cy="231.5" rx="2.1" ry="2.0" fill="#5cba22"/>
<ellipse cx="54.6" cy="222.9" rx="1.9" ry="2.1" fill="#6cc52c"/>
<ellipse cx="103.3" cy="231.1" rx="2.5" ry="1.9" fill="#358a14"/>
<ellipse cx="71.3" cy="223.1" rx="2.9" ry="2.4" fill="#358a14"/>
<ellipse cx="54.3" cy="229.8" rx="3.0" ry="1.4" fill="#358a14"/>
<ellipse cx="76.4" cy="225.9" rx="2.2" ry="1.6" fill="#5cba22"/>
<ellipse cx="103.5" cy="223.6" rx="2.8" ry="2.0" fill="#4fae1c"/>
<ellipse cx="90.2" cy="232.8" rx="2.7" ry="1.2" fill="#358a14"/>
<ellipse cx="78.4" cy="227.1" rx="2.5" ry="2.3" fill="#358a14"/>
<ellipse cx="37.1" cy="222.8" rx="1.7" ry="1.5" fill="#6cc52c"/>
<ellipse cx="74.4" cy="226.7" rx="2.4" ry="1.5" fill="#6cc52c"/>
<ellipse cx="59.7" cy="227.6" rx="1.7" ry="1.4" fill="#4fae1c"/>
<ellipse cx="58.9" cy="228.8" rx="3.0" ry="2.0" fill="#5cba22"/>
<ellipse cx="86.6" cy="229.5" rx="2.9" ry="2.0" fill="#358a14"/>
<ellipse cx="49.7" cy="232.1" rx="2.2" ry="1.7" fill="#6cc52c"/>
<ellipse cx="69.7" cy="230.0" rx="1.9" ry="1.4" fill="#4fae1c"/>
<ellipse cx="95.0" cy="238.4" rx="1.6" ry="1.2" fill="#1b470d"/>
<ellipse cx="53.8" cy="240.1" rx="2.6" ry="1.5" fill="#163d0b"/>
<ellipse cx="103.3" cy="234.2" rx="2.1" ry="1.7" fill="#2d6e14"/>
<ellipse cx="78.2" cy="238.1" rx="1.9" ry="2.0" fill="#2d6e14"/>
<ellipse cx="69.1" cy="240.1" rx="3.0" ry="1.9" fill="#1b470d"/>
<ellipse cx="46.4" cy="237.5" rx="1.9" ry="1.4" fill="#2d6e14"/>
<ellipse cx="65.6" cy="236.3" rx="2.4" ry="1.3" fill="#163d0b"/>
<ellipse cx="80.1" cy="237.7" rx="1.6" ry="2.0" fill="#163d0b"/>
<ellipse cx="34.5" cy="239.1" rx="2.9" ry="1.7" fill="#163d0b"/>
<ellipse cx="37.4" cy="237.4" rx="2.1" ry="1.4" fill="#2d6e14"/>
<ellipse cx="49.3" cy="233.1" rx="2.3" ry="1.1" fill="#2d6e14"/>
<path d="M102 241.5V228Q102 223 107 223H136Q141 223 141 228V241.5Z" fill="#22530f"/>
<ellipse cx="110.7" cy="226.4" rx="2.3" ry="1.4" fill="#4fae1c"/>
<ellipse cx="131.7" cy="231.1" rx="3.1" ry="1.6" fill="#358a14"/>
<ellipse cx="118.6" cy="231.8" rx="2.0" ry="2.2" fill="#5cba22"/>
<ellipse cx="133.5" cy="232.2" rx="2.8" ry="1.3" fill="#4fae1c"/>
<ellipse cx="119.3" cy="231.2" rx="1.9" ry="1.8" fill="#5cba22"/>
<ellipse cx="122.4" cy="228.1" rx="2.4" ry="2.2" fill="#6cc52c"/>
<ellipse cx="115.8" cy="225.3" rx="2.1" ry="2.0" fill="#3f9617"/>
<ellipse cx="104.3" cy="231.0" rx="1.9" ry="1.3" fill="#4fae1c"/>
<ellipse cx="133.0" cy="226.3" rx="1.7" ry="1.2" fill="#3f9617"/>
<ellipse cx="121.3" cy="229.6" rx="1.9" ry="1.3" fill="#6cc52c"/>
<ellipse cx="136.6" cy="228.2" rx="2.0" ry="1.4" fill="#6cc52c"/>
<ellipse cx="137.4" cy="226.9" rx="3.1" ry="1.5" fill="#3f9617"/>
<ellipse cx="105.4" cy="226.2" rx="2.7" ry="2.0" fill="#358a14"/>
<ellipse cx="104.7" cy="226.4" rx="1.9" ry="2.2" fill="#6cc52c"/>
<ellipse cx="132.2" cy="232.0" rx="2.0" ry="2.1" fill="#4fae1c"/>
<ellipse cx="135.6" cy="228.1" rx="3.3" ry="1.7" fill="#4fae1c"/>
<ellipse cx="137.0" cy="232.3" rx="1.6" ry="1.6" fill="#3f9617"/>
<ellipse cx="125.5" cy="237.6" rx="2.6" ry="1.6" fill="#163d0b"/>
<ellipse cx="110.4" cy="240.3" rx="2.3" ry="1.4" fill="#163d0b"/>
<ellipse cx="138.9" cy="237.2" rx="2.7" ry="1.7" fill="#2d6e14"/>
<ellipse cx="135.9" cy="234.8" rx="2.4" ry="1.4" fill="#1b470d"/>
<ellipse cx="132.5" cy="235.7" rx="1.7" ry="1.0" fill="#2d6e14"/>
<path d="M137 241.5V228Q137 223 142 223H148Q153 223 153 228V241.5Z" fill="#22530f"/>
<ellipse cx="150.5" cy="230.4" rx="2.9" ry="1.5" fill="#5cba22"/>
<ellipse cx="145.4" cy="226.4" rx="2.1" ry="1.4" fill="#358a14"/>
<ellipse cx="146.9" cy="228.9" rx="3.0" ry="2.1" fill="#6cc52c"/>
<ellipse cx="146.8" cy="225.2" rx="3.1" ry="1.5" fill="#6cc52c"/>
<ellipse cx="144.7" cy="222.9" rx="2.0" ry="2.1" fill="#6cc52c"/>
<ellipse cx="143.0" cy="227.1" rx="2.9" ry="2.1" fill="#3f9617"/>
<ellipse cx="150.9" cy="226.5" rx="1.7" ry="2.1" fill="#6cc52c"/>
<ellipse cx="149.4" cy="235.2" rx="2.7" ry="1.5" fill="#2d6e14"/>
<ellipse cx="141.7" cy="238.5" rx="2.7" ry="1.5" fill="#163d0b"/>
<path d="M155 241.5V228Q155 223 160 223H219Q224 223 224 228V241.5Z" fill="#22530f"/>
<ellipse cx="158.8" cy="232.1" rx="2.5" ry="1.8" fill="#5cba22"/>
<ellipse cx="182.3" cy="229.1" rx="2.9" ry="1.3" fill="#358a14"/>
<ellipse cx="173.7" cy="223.6" rx="2.9" ry="1.8" fill="#3f9617"/>
<ellipse cx="165.1" cy="231.9" rx="3.1" ry="2.3" fill="#358a14"/>
<ellipse cx="162.0" cy="225.7" rx="1.9" ry="2.2" fill="#5cba22"/>
<ellipse cx="174.2" cy="229.7" rx="2.8" ry="1.8" fill="#3f9617"/>
<ellipse cx="165.7" cy="230.6" rx="2.0" ry="2.0" fill="#6cc52c"/>
<ellipse cx="178.8" cy="229.3" rx="1.6" ry="2.2" fill="#3f9617"/>
<ellipse cx="175.4" cy="225.3" rx="1.7" ry="2.1" fill="#6cc52c"/>
<ellipse cx="196.1" cy="227.9" rx="2.7" ry="1.7" fill="#5cba22"/>
<ellipse cx="189.5" cy="232.6" rx="2.4" ry="1.2" fill="#3f9617"/>
<ellipse cx="218.8" cy="224.0" rx="3.0" ry="2.0" fill="#6cc52c"/>
<ellipse cx="186.7" cy="227.9" rx="2.4" ry="1.5" fill="#5cba22"/>
<ellipse cx="212.4" cy="231.9" rx="3.0" ry="2.3" fill="#5cba22"/>
<ellipse cx="205.7" cy="226.1" rx="1.9" ry="2.2" fill="#5cba22"/>
<ellipse cx="178.3" cy="225.9" rx="3.3" ry="1.7" fill="#5cba22"/>
<ellipse cx="170.1" cy="222.6" rx="3.1" ry="1.5" fill="#5cba22"/>
<ellipse cx="164.3" cy="228.1" rx="2.7" ry="1.3" fill="#4fae1c"/>
<ellipse cx="165.1" cy="229.9" rx="2.6" ry="1.3" fill="#5cba22"/>
<ellipse cx="172.8" cy="228.8" rx="2.0" ry="1.7" fill="#4fae1c"/>
<ellipse cx="208.3" cy="232.2" rx="2.3" ry="2.4" fill="#4fae1c"/>
<ellipse cx="209.4" cy="229.7" rx="1.7" ry="1.8" fill="#6cc52c"/>
<ellipse cx="214.9" cy="230.6" rx="2.5" ry="1.2" fill="#358a14"/>
<ellipse cx="198.6" cy="230.7" rx="3.0" ry="2.1" fill="#3f9617"/>
<ellipse cx="191.5" cy="224.2" rx="2.3" ry="1.8" fill="#3f9617"/>
<ellipse cx="174.2" cy="232.1" rx="1.7" ry="1.5" fill="#3f9617"/>
<ellipse cx="162.9" cy="225.9" rx="3.0" ry="1.4" fill="#5cba22"/>
<ellipse cx="177.0" cy="223.7" rx="3.2" ry="1.3" fill="#6cc52c"/>
<ellipse cx="205.5" cy="231.2" rx="2.8" ry="2.0" fill="#358a14"/>
<ellipse cx="187.8" cy="228.3" rx="2.9" ry="1.3" fill="#3f9617"/>
<ellipse cx="197.7" cy="228.9" rx="1.9" ry="2.3" fill="#6cc52c"/>
<ellipse cx="184.7" cy="234.5" rx="1.5" ry="1.2" fill="#2d6e14"/>
<ellipse cx="157.9" cy="238.8" rx="2.8" ry="2.0" fill="#163d0b"/>
<ellipse cx="204.9" cy="237.0" rx="2.1" ry="1.3" fill="#1b470d"/>
<ellipse cx="215.4" cy="234.4" rx="2.1" ry="1.1" fill="#2d6e14"/>
<ellipse cx="214.9" cy="239.3" rx="1.7" ry="1.7" fill="#1b470d"/>
<ellipse cx="200.9" cy="240.2" rx="2.8" ry="1.2" fill="#2d6e14"/>
<ellipse cx="178.3" cy="235.8" rx="3.0" ry="1.2" fill="#2d6e14"/>
<ellipse cx="158.8" cy="237.3" rx="2.9" ry="1.2" fill="#1b470d"/>
<ellipse cx="206.8" cy="234.7" rx="1.7" ry="1.0" fill="#163d0b"/>
<ellipse cx="210.5" cy="240.3" rx="2.2" ry="1.7" fill="#1b470d"/>
<path d="M253 241.5V228Q253 223 258 223H259Q264 223 264 228V241.5Z" fill="#22530f"/>
<ellipse cx="256.5" cy="224.3" rx="2.3" ry="2.3" fill="#6cc52c"/>
<ellipse cx="260.4" cy="228.0" rx="1.8" ry="1.2" fill="#4fae1c"/>
<ellipse cx="255.6" cy="227.3" rx="1.7" ry="2.0" fill="#6cc52c"/>
<ellipse cx="255.8" cy="227.9" rx="2.8" ry="2.2" fill="#3f9617"/>
<ellipse cx="257.0" cy="230.6" rx="1.8" ry="1.6" fill="#358a14"/>
<ellipse cx="259.9" cy="239.3" rx="3.0" ry="1.3" fill="#1b470d"/>
<path d="M262 241.5V228Q262 223 267 223H279Q284 223 284 228V241.5Z" fill="#22530f"/>
<ellipse cx="280.3" cy="231.8" rx="3.1" ry="1.4" fill="#3f9617"/>
<ellipse cx="270.2" cy="232.3" rx="2.0" ry="1.4" fill="#3f9617"/>
<ellipse cx="265.6" cy="230.8" rx="1.6" ry="1.6" fill="#5cba22"/>
<ellipse cx="267.0" cy="226.1" rx="2.5" ry="1.3" fill="#5cba22"/>
<ellipse cx="264.5" cy="225.9" rx="2.0" ry="1.4" fill="#358a14"/>
<ellipse cx="269.8" cy="230.0" rx="3.0" ry="1.3" fill="#358a14"/>
<ellipse cx="280.7" cy="225.7" rx="2.2" ry="2.1" fill="#3f9617"/>
<ellipse cx="270.9" cy="230.8" rx="2.9" ry="2.1" fill="#3f9617"/>
<ellipse cx="268.4" cy="225.9" rx="3.1" ry="2.1" fill="#3f9617"/>
<ellipse cx="267.4" cy="232.5" rx="3.3" ry="2.3" fill="#358a14"/>
<ellipse cx="272.3" cy="238.2" rx="2.7" ry="1.2" fill="#1b470d"/>
<ellipse cx="271.9" cy="233.4" rx="2.1" ry="1.5" fill="#1b470d"/>
<ellipse cx="274.0" cy="239.8" rx="2.9" ry="1.8" fill="#163d0b"/>
<rect x="0.0" y="241.5" width="284.0" height="42.0" fill="#47802e"/>
<ellipse cx="36" cy="254" rx="30" ry="6" fill="#2c5a20" opacity=".75"/><ellipse cx="95" cy="259" rx="34" ry="7" fill="#2f5f22" opacity=".6"/><ellipse cx="30" cy="277" rx="34" ry="6" fill="#82ad58" opacity=".55"/><ellipse cx="90" cy="246" rx="40" ry="3.5" fill="#6fa348" opacity=".5"/><ellipse cx="100" cy="276" rx="26" ry="5" fill="#5f9a3c" opacity=".5"/>
<rect x="0.0" y="241.5" width="284.0" height="42.0" filter="url(#nz2)" opacity=".45"/>
<rect x="0.0" y="241.5" width="284.0" height="42.0" filter="url(#nz)" opacity=".5"/>
</g>
</svg>
  <div id="sticky"><div class="abs" style="left:0;right:0;top:48.1px;font-size:34.5px;line-height:45.3px;letter-spacing:1px;-webkit-text-stroke:.6px #111">Reference<br>Image</div></div>
  <!-- sketchup model images -->
  <svg id="model" class="abs" style="left:536px;top:159.8px;overflow:visible" width="640" height="330" viewBox="0 0 640 330">
<symbol id="mdl" viewBox="0 0 613 301" preserveAspectRatio="none">
<defs>
<pattern id="wood1" width="34" height="4.4" patternUnits="userSpaceOnUse" patternTransform="rotate(-4)"><rect width="34" height="4.4" fill="#ab4c25"/><rect y="2.6" width="34" height="1.6" fill="#4e2210"/><rect y="0.9" x="5" width="16" height=".8" fill="#c26233"/><rect y="1.2" x="22" width="9" height="1" fill="#6a2e16"/></pattern>
<pattern id="wood2" width="46" height="4.2" patternUnits="userSpaceOnUse" patternTransform="rotate(0.6)"><rect width="46" height="4.2" fill="#ad4f27"/><rect y="2.5" width="46" height="1.5" fill="#4a2010"/><rect y="0.8" x="8" width="20" height=".8" fill="#c56636"/><rect y="1.1" x="30" width="12" height="1" fill="#6a2e16"/></pattern>
<pattern id="wood3" width="40" height="5.2" patternUnits="userSpaceOnUse" patternTransform="rotate(10)"><rect width="40" height="5.2" fill="#9c4522"/><rect y="3.2" width="40" height="1.8" fill="#4a2010"/></pattern>
<clipPath id="pavclip"><polygon points="100,215 130,209 178,203 250,199 350,197 385,196 423,189 540,189 560,188 554,221 498,216 394,301 77,301 140,283 221,261 170,251 121,243 150,236 200,226 150,221"/></clipPath>
<linearGradient id="gnd" x1="0" y1="0" x2="0" y2="1"><stop offset="0" stop-color="#212e17"/><stop offset="1" stop-color="#29341c"/></linearGradient>
<linearGradient id="pavdark" x1="0" y1="0" x2="0" y2="1"><stop offset="0" stop-color="#1b1b1b" stop-opacity="1"/><stop offset=".3" stop-color="#1d1d1d" stop-opacity=".92"/><stop offset=".62" stop-color="#222" stop-opacity=".55"/><stop offset="1" stop-color="#222" stop-opacity="0"/></linearGradient>
</defs>
<rect x="0.0" y="0.0" width="613.0" height="301.0" fill="#d5d2ba"/>
<polygon points="0.0,170.2 300.0,169.4 613.0,171.0 613.0,301.0 0.0,301.0" fill="url(#gnd)"/>
<path d="M0 190.5L90 188.5M560 176L613 185M575 172L613 176" stroke="#162010" stroke-width="1" fill="none"/>
<g clip-path="url(#pavclip)">
<rect x="60.0" y="180.0" width="520.0" height="125.0" fill="#353535"/>
<polygon points="-230.0,172.0 640.0,579.0 640.0,593.6" fill="#161616"/>
<polygon points="-230.0,172.0 640.0,479.4 640.0,490.5" fill="#161616"/>
<polygon points="-230.0,172.0 640.0,419.0 640.0,427.9" fill="#161616"/>
<polygon points="-230.0,172.0 640.0,378.4 640.0,385.9" fill="#161616"/>
<polygon points="-230.0,172.0 640.0,349.3 640.0,355.7" fill="#161616"/>
<polygon points="-230.0,172.0 640.0,327.4 640.0,333.0" fill="#161616"/>
<polygon points="-230.0,172.0 640.0,310.3 640.0,315.3" fill="#161616"/>
<polygon points="-230.0,172.0 640.0,296.6 640.0,301.1" fill="#161616"/>
<polygon points="-230.0,172.0 640.0,285.3 640.0,289.4" fill="#161616"/>
<polygon points="-230.0,172.0 640.0,276.0 640.0,279.7" fill="#161616"/>
<polygon points="-230.0,172.0 640.0,268.0 640.0,271.5" fill="#161616"/>
<polygon points="-230.0,172.0 640.0,261.2 640.0,264.4" fill="#161616"/>
<polygon points="-230.0,172.0 640.0,255.3 640.0,258.3" fill="#161616"/>
<polygon points="-230.0,172.0 640.0,250.1 640.0,252.9" fill="#161616"/>
<polygon points="-230.0,172.0 640.0,245.5 640.0,248.2" fill="#161616"/>
<polygon points="-230.0,172.0 640.0,241.5 640.0,244.0" fill="#161616"/>
<polygon points="-230.0,172.0 640.0,237.8 640.0,240.2" fill="#161616"/>
<polygon points="-230.0,172.0 640.0,234.6 640.0,236.8" fill="#161616"/>
<polygon points="-230.0,172.0 640.0,231.6 640.0,233.7" fill="#161616"/>
<polygon points="-230.0,172.0 640.0,228.9 640.0,230.9" fill="#161616"/>
<polygon points="-230.0,172.0 640.0,226.4 640.0,228.4" fill="#161616"/>
<polygon points="-230.0,172.0 640.0,224.2 640.0,226.1" fill="#161616"/>
<polygon points="-230.0,172.0 640.0,222.1 640.0,223.9" fill="#161616"/>
<polygon points="-230.0,172.0 640.0,220.2 640.0,221.9" fill="#161616"/>
<polygon points="-230.0,172.0 640.0,218.4 640.0,220.1" fill="#161616"/>
<polygon points="-230.0,172.0 640.0,216.7 640.0,218.4" fill="#161616"/>
<polygon points="545.0,173.0 -705.9,310.0 -697.9,310.0" fill="#161616"/>
<polygon points="545.0,173.0 -667.4,310.0 -659.4,310.0" fill="#161616"/>
<polygon points="545.0,173.0 -628.9,310.0 -620.9,310.0" fill="#161616"/>
<polygon points="545.0,173.0 -590.3,310.0 -582.3,310.0" fill="#161616"/>
<polygon points="545.0,173.0 -551.8,310.0 -543.8,310.0" fill="#161616"/>
<polygon points="545.0,173.0 -513.3,310.0 -505.3,310.0" fill="#161616"/>
<polygon points="545.0,173.0 -474.7,310.0 -466.7,310.0" fill="#161616"/>
<polygon points="545.0,173.0 -436.2,310.0 -428.2,310.0" fill="#161616"/>
<polygon points="545.0,173.0 -397.7,310.0 -389.7,310.0" fill="#161616"/>
<polygon points="545.0,173.0 -359.1,310.0 -351.1,310.0" fill="#161616"/>
<polygon points="545.0,173.0 -320.6,310.0 -312.6,310.0" fill="#161616"/>
<polygon points="545.0,173.0 -282.1,310.0 -274.1,310.0" fill="#161616"/>
<polygon points="545.0,173.0 -243.5,310.0 -235.5,310.0" fill="#161616"/>
<polygon points="545.0,173.0 -205.0,310.0 -197.0,310.0" fill="#161616"/>
<polygon points="545.0,173.0 -166.5,310.0 -158.5,310.0" fill="#161616"/>
<polygon points="545.0,173.0 -127.9,310.0 -119.9,310.0" fill="#161616"/>
<polygon points="545.0,173.0 -89.4,310.0 -81.4,310.0" fill="#161616"/>
<polygon points="545.0,173.0 -50.9,310.0 -42.9,310.0" fill="#161616"/>
<polygon points="545.0,173.0 -12.4,310.0 -4.4,310.0" fill="#161616"/>
<polygon points="545.0,173.0 26.2,310.0 34.2,310.0" fill="#161616"/>
<polygon points="545.0,173.0 64.7,310.0 72.7,310.0" fill="#161616"/>
<polygon points="545.0,173.0 103.2,310.0 111.2,310.0" fill="#161616"/>
<polygon points="545.0,173.0 141.8,310.0 149.8,310.0" fill="#161616"/>
<polygon points="545.0,173.0 180.3,310.0 188.3,310.0" fill="#161616"/>
<polygon points="545.0,173.0 218.8,310.0 226.8,310.0" fill="#161616"/>
<polygon points="545.0,173.0 257.4,310.0 265.4,310.0" fill="#161616"/>
<polygon points="545.0,173.0 295.9,310.0 303.9,310.0" fill="#161616"/>
<polygon points="545.0,173.0 334.4,310.0 342.4,310.0" fill="#161616"/>
<polygon points="545.0,173.0 373.0,310.0 381.0,310.0" fill="#161616"/>
<polygon points="545.0,173.0 411.5,310.0 419.5,310.0" fill="#161616"/>
<path d="M-230 172L640 586.3" stroke="#8f8f8f" stroke-width="3.9" stroke-dasharray="5.0 4.0" fill="none"/>
<path d="M-230 172L640 484.9" stroke="#8f8f8f" stroke-width="2.9" stroke-dasharray="3.8 3.0" fill="none"/>
<path d="M-230 172L640 423.4" stroke="#8f8f8f" stroke-width="2.4" stroke-dasharray="3.1 2.4" fill="none"/>
<path d="M-230 172L640 382.1" stroke="#8f8f8f" stroke-width="2.0" stroke-dasharray="2.6 2.0" fill="none"/>
<path d="M-230 172L640 352.5" stroke="#8f8f8f" stroke-width="1.7" stroke-dasharray="2.2 1.8" fill="none"/>
<path d="M-230 172L640 330.2" stroke="#8f8f8f" stroke-width="1.5" stroke-dasharray="1.9 1.5" fill="none"/>
<path d="M-230 172L640 312.8" stroke="#8f8f8f" stroke-width="1.3" stroke-dasharray="1.7 1.4" fill="none"/>
<path d="M-230 172L640 298.8" stroke="#8f8f8f" stroke-width="1.2" stroke-dasharray="1.5 1.2" fill="none"/>
<path d="M-230 172L640 287.4" stroke="#8f8f8f" stroke-width="1.1" stroke-dasharray="1.4 1.1" fill="none"/>
<path d="M-230 172L640 277.8" stroke="#8f8f8f" stroke-width="1.0" stroke-dasharray="1.3 1.0" fill="none"/>
<path d="M-230 172L640 269.8" stroke="#8f8f8f" stroke-width="0.9" stroke-dasharray="1.2 1.0" fill="none"/>
<path d="M-230 172L640 262.8" stroke="#8f8f8f" stroke-width="0.9" stroke-dasharray="1.1 0.9" fill="none"/>
<path d="M-230 172L640 256.8" stroke="#8f8f8f" stroke-width="0.8" stroke-dasharray="1.0 0.8" fill="none"/>
<path d="M-230 172L640 251.5" stroke="#8f8f8f" stroke-width="0.7" stroke-dasharray="1.0 0.8" fill="none"/>
<path d="M-230 172L640 246.9" stroke="#8f8f8f" stroke-width="0.7" stroke-dasharray="1.0 0.8" fill="none"/>
<path d="M-230 172L640 242.7" stroke="#8f8f8f" stroke-width="0.7" stroke-dasharray="1.0 0.8" fill="none"/>
<path d="M-230 172L640 239.0" stroke="#8f8f8f" stroke-width="0.6" stroke-dasharray="1.0 0.8" fill="none"/>
<path d="M-230 172L640 235.7" stroke="#8f8f8f" stroke-width="0.6" stroke-dasharray="1.0 0.8" fill="none"/>
<path d="M-230 172L640 232.7" stroke="#8f8f8f" stroke-width="0.6" stroke-dasharray="1.0 0.8" fill="none"/>
<path d="M-230 172L640 229.9" stroke="#8f8f8f" stroke-width="0.5" stroke-dasharray="1.0 0.8" fill="none"/>
<path d="M-230 172L640 227.4" stroke="#8f8f8f" stroke-width="0.5" stroke-dasharray="1.0 0.8" fill="none"/>
<path d="M-230 172L640 225.1" stroke="#8f8f8f" stroke-width="0.5" stroke-dasharray="1.0 0.8" fill="none"/>
<path d="M-230 172L640 223.0" stroke="#8f8f8f" stroke-width="0.5" stroke-dasharray="1.0 0.8" fill="none"/>
<path d="M-230 172L640 221.0" stroke="#8f8f8f" stroke-width="0.5" stroke-dasharray="1.0 0.8" fill="none"/>
<path d="M-230 172L640 219.2" stroke="#8f8f8f" stroke-width="0.5" stroke-dasharray="1.0 0.8" fill="none"/>
<path d="M-230 172L640 217.5" stroke="#8f8f8f" stroke-width="0.5" stroke-dasharray="1.0 0.8" fill="none"/>
<path d="M395.4 189.4L170.9 214.1" stroke="#939393" stroke-width="0.7" stroke-dasharray="1.2 1.0" fill="none"/>
<path d="M170.9 214.1L-140.8 248.4" stroke="#939393" stroke-width="1.3" stroke-dasharray="2.0 1.6" fill="none"/>
<path d="M-140.8 248.4L-701.9 310.0" stroke="#939393" stroke-width="2.3" stroke-dasharray="3.4 2.7" fill="none"/>
<path d="M400.0 189.4L182.5 214.1" stroke="#939393" stroke-width="0.7" stroke-dasharray="1.2 1.0" fill="none"/>
<path d="M182.5 214.1L-119.6 248.4" stroke="#939393" stroke-width="1.3" stroke-dasharray="2.0 1.6" fill="none"/>
<path d="M-119.6 248.4L-663.4 310.0" stroke="#939393" stroke-width="2.3" stroke-dasharray="3.4 2.7" fill="none"/>
<path d="M404.6 189.4L194.0 214.1" stroke="#939393" stroke-width="0.7" stroke-dasharray="1.2 1.0" fill="none"/>
<path d="M194.0 214.1L-98.4 248.4" stroke="#939393" stroke-width="1.3" stroke-dasharray="2.0 1.6" fill="none"/>
<path d="M-98.4 248.4L-624.9 310.0" stroke="#939393" stroke-width="2.3" stroke-dasharray="3.4 2.7" fill="none"/>
<path d="M409.2 189.4L205.6 214.1" stroke="#939393" stroke-width="0.7" stroke-dasharray="1.2 1.0" fill="none"/>
<path d="M205.6 214.1L-77.2 248.4" stroke="#939393" stroke-width="1.3" stroke-dasharray="2.0 1.6" fill="none"/>
<path d="M-77.2 248.4L-586.3 310.0" stroke="#939393" stroke-width="2.3" stroke-dasharray="3.4 2.7" fill="none"/>
<path d="M413.9 189.4L217.2 214.1" stroke="#939393" stroke-width="0.7" stroke-dasharray="1.2 1.0" fill="none"/>
<path d="M217.2 214.1L-56.0 248.4" stroke="#939393" stroke-width="1.3" stroke-dasharray="2.0 1.6" fill="none"/>
<path d="M-56.0 248.4L-547.8 310.0" stroke="#939393" stroke-width="2.3" stroke-dasharray="3.4 2.7" fill="none"/>
<path d="M418.5 189.4L228.7 214.1" stroke="#939393" stroke-width="0.7" stroke-dasharray="1.2 1.0" fill="none"/>
<path d="M228.7 214.1L-34.8 248.4" stroke="#939393" stroke-width="1.3" stroke-dasharray="2.0 1.6" fill="none"/>
<path d="M-34.8 248.4L-509.3 310.0" stroke="#939393" stroke-width="2.3" stroke-dasharray="3.4 2.7" fill="none"/>
<path d="M423.1 189.4L240.3 214.1" stroke="#939393" stroke-width="0.7" stroke-dasharray="1.2 1.0" fill="none"/>
<path d="M240.3 214.1L-13.6 248.4" stroke="#939393" stroke-width="1.3" stroke-dasharray="2.0 1.6" fill="none"/>
<path d="M-13.6 248.4L-470.7 310.0" stroke="#939393" stroke-width="2.3" stroke-dasharray="3.4 2.7" fill="none"/>
<path d="M427.7 189.4L251.8 214.1" stroke="#939393" stroke-width="0.7" stroke-dasharray="1.2 1.0" fill="none"/>
<path d="M251.8 214.1L7.5 248.4" stroke="#939393" stroke-width="1.3" stroke-dasharray="2.0 1.6" fill="none"/>
<path d="M7.5 248.4L-432.2 310.0" stroke="#939393" stroke-width="2.3" stroke-dasharray="3.4 2.7" fill="none"/>
<path d="M432.4 189.4L263.4 214.1" stroke="#939393" stroke-width="0.7" stroke-dasharray="1.2 1.0" fill="none"/>
<path d="M263.4 214.1L28.7 248.4" stroke="#939393" stroke-width="1.3" stroke-dasharray="2.0 1.6" fill="none"/>
<path d="M28.7 248.4L-393.7 310.0" stroke="#939393" stroke-width="2.3" stroke-dasharray="3.4 2.7" fill="none"/>
<path d="M437.0 189.4L275.0 214.1" stroke="#939393" stroke-width="0.7" stroke-dasharray="1.2 1.0" fill="none"/>
<path d="M275.0 214.1L49.9 248.4" stroke="#939393" stroke-width="1.3" stroke-dasharray="2.0 1.6" fill="none"/>
<path d="M49.9 248.4L-355.1 310.0" stroke="#939393" stroke-width="2.3" stroke-dasharray="3.4 2.7" fill="none"/>
<path d="M441.6 189.4L286.5 214.1" stroke="#939393" stroke-width="0.7" stroke-dasharray="1.2 1.0" fill="none"/>
<path d="M286.5 214.1L71.1 248.4" stroke="#939393" stroke-width="1.3" stroke-dasharray="2.0 1.6" fill="none"/>
<path d="M71.1 248.4L-316.6 310.0" stroke="#939393" stroke-width="2.3" stroke-dasharray="3.4 2.7" fill="none"/>
<path d="M446.2 189.4L298.1 214.1" stroke="#939393" stroke-width="0.7" stroke-dasharray="1.2 1.0" fill="none"/>
<path d="M298.1 214.1L92.3 248.4" stroke="#939393" stroke-width="1.3" stroke-dasharray="2.0 1.6" fill="none"/>
<path d="M92.3 248.4L-278.1 310.0" stroke="#939393" stroke-width="2.3" stroke-dasharray="3.4 2.7" fill="none"/>
<path d="M450.9 189.4L309.6 214.1" stroke="#939393" stroke-width="0.7" stroke-dasharray="1.2 1.0" fill="none"/>
<path d="M309.6 214.1L113.5 248.4" stroke="#939393" stroke-width="1.3" stroke-dasharray="2.0 1.6" fill="none"/>
<path d="M113.5 248.4L-239.5 310.0" stroke="#939393" stroke-width="2.3" stroke-dasharray="3.4 2.7" fill="none"/>
<path d="M455.5 189.4L321.2 214.1" stroke="#939393" stroke-width="0.7" stroke-dasharray="1.2 1.0" fill="none"/>
<path d="M321.2 214.1L134.7 248.4" stroke="#939393" stroke-width="1.3" stroke-dasharray="2.0 1.6" fill="none"/>
<path d="M134.7 248.4L-201.0 310.0" stroke="#939393" stroke-width="2.3" stroke-dasharray="3.4 2.7" fill="none"/>
<path d="M460.1 189.4L332.8 214.1" stroke="#939393" stroke-width="0.7" stroke-dasharray="1.2 1.0" fill="none"/>
<path d="M332.8 214.1L155.9 248.4" stroke="#939393" stroke-width="1.3" stroke-dasharray="2.0 1.6" fill="none"/>
<path d="M155.9 248.4L-162.5 310.0" stroke="#939393" stroke-width="2.3" stroke-dasharray="3.4 2.7" fill="none"/>
<path d="M464.7 189.4L344.3 214.1" stroke="#939393" stroke-width="0.7" stroke-dasharray="1.2 1.0" fill="none"/>
<path d="M344.3 214.1L177.1 248.4" stroke="#939393" stroke-width="1.3" stroke-dasharray="2.0 1.6" fill="none"/>
<path d="M177.1 248.4L-123.9 310.0" stroke="#939393" stroke-width="2.3" stroke-dasharray="3.4 2.7" fill="none"/>
<path d="M469.4 189.4L355.9 214.1" stroke="#939393" stroke-width="0.7" stroke-dasharray="1.2 1.0" fill="none"/>
<path d="M355.9 214.1L198.3 248.4" stroke="#939393" stroke-width="1.3" stroke-dasharray="2.0 1.6" fill="none"/>
<path d="M198.3 248.4L-85.4 310.0" stroke="#939393" stroke-width="2.3" stroke-dasharray="3.4 2.7" fill="none"/>
<path d="M474.0 189.4L367.4 214.1" stroke="#939393" stroke-width="0.7" stroke-dasharray="1.2 1.0" fill="none"/>
<path d="M367.4 214.1L219.5 248.4" stroke="#939393" stroke-width="1.3" stroke-dasharray="2.0 1.6" fill="none"/>
<path d="M219.5 248.4L-46.9 310.0" stroke="#939393" stroke-width="2.3" stroke-dasharray="3.4 2.7" fill="none"/>
<path d="M478.6 189.4L379.0 214.1" stroke="#939393" stroke-width="0.7" stroke-dasharray="1.2 1.0" fill="none"/>
<path d="M379.0 214.1L240.7 248.4" stroke="#939393" stroke-width="1.3" stroke-dasharray="2.0 1.6" fill="none"/>
<path d="M240.7 248.4L-8.4 310.0" stroke="#939393" stroke-width="2.3" stroke-dasharray="3.4 2.7" fill="none"/>
<path d="M483.2 189.4L390.6 214.1" stroke="#939393" stroke-width="0.7" stroke-dasharray="1.2 1.0" fill="none"/>
<path d="M390.6 214.1L261.8 248.4" stroke="#939393" stroke-width="1.3" stroke-dasharray="2.0 1.6" fill="none"/>
<path d="M261.8 248.4L30.2 310.0" stroke="#939393" stroke-width="2.3" stroke-dasharray="3.4 2.7" fill="none"/>
<path d="M487.8 189.4L402.1 214.1" stroke="#939393" stroke-width="0.7" stroke-dasharray="1.2 1.0" fill="none"/>
<path d="M402.1 214.1L283.0 248.4" stroke="#939393" stroke-width="1.3" stroke-dasharray="2.0 1.6" fill="none"/>
<path d="M283.0 248.4L68.7 310.0" stroke="#939393" stroke-width="2.3" stroke-dasharray="3.4 2.7" fill="none"/>
<path d="M492.5 189.4L413.7 214.1" stroke="#939393" stroke-width="0.7" stroke-dasharray="1.2 1.0" fill="none"/>
<path d="M413.7 214.1L304.2 248.4" stroke="#939393" stroke-width="1.3" stroke-dasharray="2.0 1.6" fill="none"/>
<path d="M304.2 248.4L107.2 310.0" stroke="#939393" stroke-width="2.3" stroke-dasharray="3.4 2.7" fill="none"/>
<path d="M497.1 189.4L425.2 214.1" stroke="#939393" stroke-width="0.7" stroke-dasharray="1.2 1.0" fill="none"/>
<path d="M425.2 214.1L325.4 248.4" stroke="#939393" stroke-width="1.3" stroke-dasharray="2.0 1.6" fill="none"/>
<path d="M325.4 248.4L145.8 310.0" stroke="#939393" stroke-width="2.3" stroke-dasharray="3.4 2.7" fill="none"/>
<path d="M501.7 189.4L436.8 214.1" stroke="#939393" stroke-width="0.7" stroke-dasharray="1.2 1.0" fill="none"/>
<path d="M436.8 214.1L346.6 248.4" stroke="#939393" stroke-width="1.3" stroke-dasharray="2.0 1.6" fill="none"/>
<path d="M346.6 248.4L184.3 310.0" stroke="#939393" stroke-width="2.3" stroke-dasharray="3.4 2.7" fill="none"/>
<path d="M506.3 189.4L448.4 214.1" stroke="#939393" stroke-width="0.7" stroke-dasharray="1.2 1.0" fill="none"/>
<path d="M448.4 214.1L367.8 248.4" stroke="#939393" stroke-width="1.3" stroke-dasharray="2.0 1.6" fill="none"/>
<path d="M367.8 248.4L222.8 310.0" stroke="#939393" stroke-width="2.3" stroke-dasharray="3.4 2.7" fill="none"/>
<path d="M511.0 189.4L459.9 214.1" stroke="#939393" stroke-width="0.7" stroke-dasharray="1.2 1.0" fill="none"/>
<path d="M459.9 214.1L389.0 248.4" stroke="#939393" stroke-width="1.3" stroke-dasharray="2.0 1.6" fill="none"/>
<path d="M389.0 248.4L261.4 310.0" stroke="#939393" stroke-width="2.3" stroke-dasharray="3.4 2.7" fill="none"/>
<path d="M515.6 189.4L471.5 214.1" stroke="#939393" stroke-width="0.7" stroke-dasharray="1.2 1.0" fill="none"/>
<path d="M471.5 214.1L410.2 248.4" stroke="#939393" stroke-width="1.3" stroke-dasharray="2.0 1.6" fill="none"/>
<path d="M410.2 248.4L299.9 310.0" stroke="#939393" stroke-width="2.3" stroke-dasharray="3.4 2.7" fill="none"/>
<path d="M520.2 189.4L483.0 214.1" stroke="#939393" stroke-width="0.7" stroke-dasharray="1.2 1.0" fill="none"/>
<path d="M483.0 214.1L431.4 248.4" stroke="#939393" stroke-width="1.3" stroke-dasharray="2.0 1.6" fill="none"/>
<path d="M431.4 248.4L338.4 310.0" stroke="#939393" stroke-width="2.3" stroke-dasharray="3.4 2.7" fill="none"/>
<path d="M524.8 189.4L494.6 214.1" stroke="#939393" stroke-width="0.7" stroke-dasharray="1.2 1.0" fill="none"/>
<path d="M494.6 214.1L452.6 248.4" stroke="#939393" stroke-width="1.3" stroke-dasharray="2.0 1.6" fill="none"/>
<path d="M452.6 248.4L377.0 310.0" stroke="#939393" stroke-width="2.3" stroke-dasharray="3.4 2.7" fill="none"/>
<path d="M529.5 189.4L506.1 214.1" stroke="#939393" stroke-width="0.7" stroke-dasharray="1.2 1.0" fill="none"/>
<path d="M506.1 214.1L473.8 248.4" stroke="#939393" stroke-width="1.3" stroke-dasharray="2.0 1.6" fill="none"/>
<path d="M473.8 248.4L415.5 310.0" stroke="#939393" stroke-width="2.3" stroke-dasharray="3.4 2.7" fill="none"/>
<rect x="60" y="180" width="520" height="80" fill="url(#pavdark)"/>
</g>
<path d="M100 215.5L150 221.5L200 226.5M121 243.5L170 251.5L221 261.5M77 301L140 283.5L221 262" stroke="#a8a8a8" stroke-width="2.4" stroke-dasharray="3.4 2.6" fill="none"/>
<path d="M394 301L498 216" stroke="#b0b0b0" stroke-width="2.8" stroke-dasharray="3.6 3" fill="none"/>
<polygon points="498.0,201.0 540.0,190.0 560.0,188.0 554.0,221.0 498.0,216.0" fill="#2b2b2b"/>
<path d="M500 214L553 220.5" stroke="#8c8c8c" stroke-width="1.6" fill="none"/>
<polygon points="88.0,190.0 162.5,198.0 217.0,191.5 350.0,194.0 423.0,195.0 423.0,198.0 350.0,198.0 217.0,196.0 162.5,202.0 88.0,194.0" fill="#191919"/>
<polygon points="164.0,101.0 309.0,88.0 309.0,131.0 164.0,129.5" fill="url(#wood1)"/>
<polygon points="309.0,88.0 364.0,99.0 364.0,116.0 337.0,119.5 337.0,131.0 309.0,131.0" fill="url(#wood3)"/>
<rect x="182.0" y="101.5" width="27.0" height="28.0" fill="#2d3032"/>
<rect x="183.5" y="103.0" width="6.5" height="25.5" fill="#a9c0c4"/>
<rect x="191.5" y="103.0" width="6.0" height="25.5" fill="#b7cacd"/>
<rect x="200.0" y="103.0" width="7.5" height="25.5" fill="#a3bbc0"/>
<rect x="269.5" y="93.0" width="12.5" height="8.0" fill="#2d3032"/>
<rect x="271.0" y="94.3" width="9.5" height="5.4" fill="#a9c4cc"/>
<rect x="339.5" y="100.0" width="6.5" height="6.5" fill="#2d3032"/>
<rect x="340.6" y="101.2" width="4.3" height="4.2" fill="#9db8c0"/>
<polygon points="152.0,95.5 163.0,91.0 308.0,73.2 374.0,96.5 374.0,99.8 363.0,100.5 309.0,88.6 164.0,102.0 152.5,99.5" fill="#3b3b3b"/>
<polygon points="163.0,91.0 308.0,73.2 312.0,75.0 170.0,93.5" fill="#2a2a2a"/>
<path d="M92.0 107.5V130.0 M102.2 107.2V129.6 M112.4 106.8V129.1 M122.6 106.5V128.7 M132.8 106.1V128.2 M143.0 105.8V127.8 M153.2 105.4V127.3 M163.4 105.0V126.8 M92 109.0L164 106.6 M92 114.0L164 111.6 M92 119.0L164 116.6 M92 124.0L164 121.6" stroke="#555550" stroke-width=".9" fill="none"/>
<polygon points="72.5,132.0 163.0,126.3 240.0,128.4 357.0,131.0 357.0,136.6 240.0,134.6 163.0,133.0 73.5,137.2" fill="#3c3c3c"/>
<polygon points="88.5,137.0 131.0,135.0 131.0,194.5 88.5,190.5" fill="#f6f6f6"/>
<polygon points="131.0,134.5 162.5,133.0 162.5,198.0 131.0,194.5" fill="#2e3133"/>
<polygon points="162.5,133.0 183.0,134.0 183.0,194.0 162.5,198.0" fill="#2e3133"/>
<polygon points="183.0,134.0 218.0,135.0 218.0,191.5 183.0,194.0" fill="#bcbcbc"/>
<rect x="218.0" y="135.0" width="140.0" height="59.0" fill="#f4f4f4"/>
<polygon points="133.0,137.2 145.5,136.6 145.5,147.4 133.0,147.8" fill="#a9c1c5"/>
<polygon points="133.0,151.0 145.5,150.6 145.5,195.2 133.0,193.6" fill="#b3c8cb"/>
<polygon points="147.5,137.2 160.0,136.6 160.0,147.4 147.5,147.8" fill="#a9c1c5"/>
<polygon points="147.5,151.0 160.0,150.6 160.0,195.2 147.5,193.6" fill="#b3c8cb"/>
<polygon points="167.0,136.6 181.0,137.0 181.0,147.6 167.0,147.4" fill="#a3bbc0"/>
<polygon points="167.0,150.6 181.0,150.8 181.0,192.8 167.0,195.4" fill="#a9c0c4"/>
<rect x="218.0" y="139.5" width="12.0" height="51.5" fill="#2e3133"/>
<rect x="219.5" y="141.0" width="9.0" height="6.5" fill="#a9c1c5"/>
<rect x="219.5" y="150.0" width="9.0" height="39.5" fill="#b3c8cb"/>
<rect x="238.5" y="139.5" width="29.0" height="51.5" fill="#2e3133"/>
<rect x="240.0" y="141.0" width="26.0" height="7.0" fill="#a9c1c5"/>
<rect x="240.0" y="150.5" width="12.0" height="39.0" fill="#bdd0d2"/>
<rect x="254.0" y="150.5" width="12.0" height="39.0" fill="#b3c8cb"/>
<rect x="267.5" y="139.0" width="30.5" height="31.5" fill="#2e3133"/>
<rect x="269.0" y="140.5" width="27.5" height="8.5" fill="#a6bec2"/>
<rect x="269.0" y="151.5" width="12.5" height="17.0" fill="#b3c8cb"/>
<rect x="284.0" y="151.5" width="12.5" height="17.0" fill="#c2d3d5"/>
<rect x="309.0" y="137.5" width="29.0" height="56.0" fill="#2e3133"/>
<rect x="310.5" y="139.0" width="26.0" height="9.0" fill="#a6bec2"/>
<rect x="310.5" y="150.5" width="4.0" height="41.5" fill="#a9c1c5"/>
<rect x="333.0" y="150.5" width="3.5" height="41.5" fill="#a9c1c5"/>
<rect x="316.0" y="150.5" width="15.5" height="42.0" fill="#4c4c4e"/>
<polygon points="358.0,134.0 389.0,132.5 389.0,195.0 358.0,194.0" fill="#f5f5f5"/>
<polygon points="389.0,132.5 423.5,137.5 423.5,190.0 389.0,195.0" fill="#cfcfcf"/>
<rect x="396.0" y="150.5" width="5.4" height="42.5" fill="#3a3d3f"/>
<rect x="397.0" y="151.5" width="3.4" height="40.5" fill="#a6bec2"/>
<polygon points="423.5,135.0 531.6,134.0 531.6,199.0 423.5,194.3" fill="url(#wood2)"/>
<polygon points="531.6,134.0 539.0,138.0 539.0,193.0 531.6,199.0" fill="#8e3f1f"/>
<polygon points="423.5,194.3 531.6,199.0 531.6,201.0 423.5,196.3" fill="#8a8a8a"/>
<polygon points="540.5,150.0 552.0,151.0 552.0,182.5 540.5,184.0" fill="#a94d27"/>
<polygon points="538.5,144.5 556.5,146.4 556.5,150.0 538.5,148.5" fill="#3a3a3a"/>
<polygon points="337.0,121.0 526.0,109.0 541.0,135.5 531.6,134.5 423.5,135.5 389.0,132.6 358.0,133.8 337.0,131.0" fill="#585858"/>
<polygon points="330.0,118.6 527.0,106.6 546.5,134.0 544.5,137.2 540.0,136.0 524.5,110.2 337.0,122.0 330.0,122.0" fill="#333"/>
<polygon points="423.5,131.6 531.6,130.8 531.6,135.2 423.5,136.0" fill="#404040"/>
<rect x="349.0" y="122.5" width="5.2" height="80.5" fill="#3d3d3d"/>
<rect x="505.2" y="114.5" width="5.6" height="97.5" fill="#404040"/>
</symbol>
<use href="#mdl" x="0" y="0" width="612" height="300"/>
<use href="#mdl" x="12" y="12.2" width="613" height="301"/>
<rect x="10.1" y="10.3" width="616.8" height="304.8" fill="none" stroke="#e6f3f2" stroke-width="1.1" opacity=".85"/>
<rect x="12" y="12.2" width="613" height="301" fill="none" stroke="#62d2f6" stroke-width="2.7"/>
<g fill="#00bfff"><circle cx="12.1" cy="12.2" r="9.3"/><circle cx="625" cy="12.2" r="9.3"/><circle cx="12.1" cy="313.2" r="9.3"/><circle cx="625" cy="313.2" r="9.3"/></g>
</svg>

  <div id="toolbar">
    <svg class="abs" style="left:-2px;top:-2px" width="1100" height="60" viewBox="337 113.5 1100 60" fill="none" stroke-linecap="round" stroke-linejoin="round">
      <defs>
        <radialGradient id="glow" cx="0.5" cy="0.5" r="0.5"><stop offset="0" stop-color="#6a6172" stop-opacity=".95"/><stop offset=".5" stop-color="#5a5463" stop-opacity=".72"/><stop offset=".8" stop-color="#45424c" stop-opacity=".4"/><stop offset="1" stop-color="#3a3840" stop-opacity="0"/></radialGradient>
        <linearGradient id="chatg" x1="377" y1="130" x2="353" y2="157" gradientUnits="userSpaceOnUse"><stop offset="0" stop-color="#c9c8ff"/><stop offset=".55" stop-color="#dcc3f6"/><stop offset="1" stop-color="#f6b6e8"/></linearGradient>
      </defs>
      <ellipse cx="366.5" cy="144.2" rx="31" ry="29.5" fill="url(#glow)"/>
      <path d="M365 135.9H357.2Q355.1 135.9 355.1 138V156.4L359 153.3H374Q376.6 153.3 376.6 150.8V147.6" stroke="url(#chatg)" stroke-width="2.2"/>
      <path d="M376.4 129.6C377 133.8 378.8 135.6 383 136.2C378.8 136.8 377 138.6 376.4 142.8C375.8 138.6 374 136.8 369.8 136.2C374 135.6 375.8 133.8 376.4 129.6Z" fill="#d0c6fb"/>
      <path d="M398.6 125.4V161.4M1177.5 125.4V161.4M1337.5 125.4V161.4" stroke="#454545" stroke-width="2"/>
      <rect x="411.8" y="125.3" width="198" height="36.5" rx="6" fill="#65535f"/>
      <!-- building icon -->
      <g stroke="#f3bfec" stroke-width="1.7">
        <path d="M424.9 155V134.2Q424.9 132.6 426.5 132.6H433.6Q435.2 132.6 435.2 134.2V155Z"/>
        <path d="M430 132.6V155M424.9 138.2H435.2M424.9 143.8H435.2M424.9 149.4H435.2"/>
        <path d="M435.2 138.6H446.4Q448 138.6 448 140.2V155H435.2"/>
        <path d="M438.6 144.2H441M443 144.2H445.2M438.6 149.4H441M443 149.4H445.2" stroke-width="1.3"/>
      </g>
      <!-- edit material -->
      <rect x="634.5" y="131.7" width="23" height="22.8" rx="2.6" stroke="#b4b4b4" stroke-width="2.3"/>
      <path d="M641 141.8L645 137.8M641 145.6L649 137.6M641.2 148.4L651.4 138.2M644 148.6L651.6 141M648 148.6L651.6 145" stroke="#c4c4c4" stroke-width="1.25"/>
      <!-- populate -->
      <g fill="#f4f4f4">
        <circle cx="827.6" cy="134" r="2.7"/><circle cx="842.7" cy="134" r="2.7"/><circle cx="835.4" cy="136.5" r="2.5"/>
        <path d="M825.2 137.6H829.6Q830.6 137.6 830.6 138.8V152.6H826.2V146.2H823.6V139.4Q823.6 137.6 825.2 137.6Z"/>
        <path d="M845.1 137.6H840.7Q839.7 137.6 839.7 138.8V152.6H844.1V146.2H846.7V139.4Q846.7 137.6 845.1 137.6Z"/>
        <path d="M833.2 139.6H837.6Q839.3 139.6 839.3 141.4V148.4H837.6V155.8H833.2V148.4H831.5V141.4Q831.5 139.6 833.2 139.6Z"/>
      </g>
      <!-- generate style -->
      <g stroke="#cfcfcf" stroke-width="1.9">
        <path d="M985.6 136L997.2 131.4L1004.3 149.4L992.7 155.1Z"/>
        <path d="M979.8 148.6V153.4M985 150.8L986.6 155.4" stroke-width="2.2"/>
      </g>
      <circle cx="990.3" cy="138.3" r="1.3" fill="#e6e6e6"/>
      <!-- image sparkle -->
      <g stroke="#e2e2e2" stroke-width="2.2">
        <path d="M1207.6 134.2H1199Q1196.9 134.2 1196.9 136.3V152.1Q1196.9 154.2 1199 154.2H1216.6Q1218.7 154.2 1218.7 152.1V144.6"/>
      </g>
      <path d="M1200.8 150.2L1205 144.8L1207.6 147.6L1211.2 143.6L1215.4 150.2Z" fill="#ececec"/>
      <path d="M1216.4 129.6L1217.5 133.6L1221 131.6L1219 135.1L1223 136.2L1219 137.3L1221 140.8L1217.5 138.8L1216.4 142.8L1215.3 138.8L1211.8 140.8L1213.8 137.3L1209.8 136.2L1213.8 135.1L1211.8 131.6L1215.3 133.6Z" fill="#f2f2f2"/>
      <!-- expand image -->
      <g stroke="#dedede" stroke-width="2.1">
        <path d="M1246.1 135.6Q1246.1 133.2 1248.4 133.2M1252.4 133.2H1256.4M1268.7 144.4V148M1268.7 151.6Q1268.7 154.2 1266.2 154.2H1263.4"/>
        <path d="M1262.6 139.4L1269.2 132.8M1263.4 132.6H1269.4V138.6"/>
        <rect x="1246.1" y="143" width="11.6" height="11.2" rx="1.6"/>
        <path d="M1249.6 153.6Q1251.6 148.8 1257.4 148.6" stroke-width="1.7"/>
      </g>
      <!-- download -->
      <g stroke="#ececec" stroke-width="2.3">
        <path d="M1305.8 132.6V147.6M1300.2 142.4L1305.8 148L1311.4 142.4"/>
        <path d="M1296 149.4V151.4Q1296 153.8 1298.4 153.8H1313.4Q1315.8 153.8 1315.8 151.4V149.4"/>
      </g>
      <!-- focus -->
      <g stroke="#e2e2e2" stroke-width="2.3">
        <path d="M1357 139V135.4Q1357 132.8 1359.6 132.8H1363.4M1373.8 132.8H1377.6Q1380.2 132.8 1380.2 135.4V139M1380.2 148.2V151.6Q1380.2 154.2 1377.6 154.2H1373.8M1363.4 154.2H1359.6Q1357 154.2 1357 151.6V148.2"/>
        <circle cx="1368.6" cy="143.6" r="4"/>
      </g>
    </svg>
    <div class="tlabel" style="left:121px;top:16.4px;color:#f7c4f1;letter-spacing:.33px">Render design</div>
    <div class="tlabel" style="left:331px;top:16.4px;letter-spacing:.16px">Edit Material</div>
    <div class="tlabel" style="left:520.5px;top:16.4px;letter-spacing:.16px">Populate</div>
    <div class="tlabel" style="left:676px;top:16.4px;letter-spacing:.31px">Generate style</div>
  </div>

  <!-- top-right widget -->
  <div class="abs" style="left:1562px;top:-30px;width:270px;height:53px;background:#262626;border:1.5px solid #424242;border-radius:14px;box-shadow:0 3px 8px rgba(0,0,0,.3)">
    <div class="abs" style="left:22px;top:0;width:64px;height:40px;border-radius:20px;background:#2f2f2f"></div>
    <div class="abs" style="left:30px;top:5.6px;width:26px;height:26px;border-radius:50%;background:#e8457c;border:1.6px solid #43d3c2"></div>
    <div class="abs" style="left:109px;top:14px;width:1.5px;height:26px;background:#444"></div>
    <div class="abs" style="left:129px;top:10px;width:122px;height:30px;border-radius:5px;background:#454545"></div>
  </div>

  <div id="panel">
    <div class="t med2" style="left:15.8px;top:18.9px;font-size:21.8px;letter-spacing:.4px;color:#f3f3f3">Render design</div>
    <svg class="abs" style="left:432.9px;top:12.1px" width="32" height="32" viewBox="0 0 32 32" fill="none" stroke="#f0f0f0" stroke-width="2.1" stroke-linecap="round" stroke-linejoin="round"><rect x="3.6" y="4.4" width="24.4" height="24.4" rx="4"/><path d="M3.6 10.6H28"/><path d="M11.9 21.4L15.9 17.6L19.9 21.4"/></svg>
    <div class="hr" style="left:16.4px;top:57.3px;width:450.8px"></div>
    <div class="t med2" style="left:18.9px;top:82.8px;font-size:20.3px;letter-spacing:.48px;color:#eee">Image reference</div>
    <div class="abs" style="left:19.8px;top:122.8px;width:445px;height:167.2px;border:1px dashed #5c5c5c;border-radius:6px"></div>
    <div class="t" style="left:20.5px;width:444.5px;text-align:center;top:145.7px;font-size:19.2px;font-weight:700;letter-spacing:.17px;color:#f0f0f0">Drag media here or click to upload</div>
    <div class="t gr" style="top:188.5px;letter-spacing:0">PNG, JPG • Max 10MB</div>
    <div class="t gr" style="top:219.2px;letter-spacing:.51px">e.g. CAD Screenshot, physical model,</div>
    <div class="t gr" style="top:248.7px;letter-spacing:.74px">simple render, sketch</div>
    <div class="hr" style="left:20.5px;top:308.6px;width:444.5px"></div>
    <div class="t med2" style="left:18.9px;top:331px;font-size:20.3px;letter-spacing:.6px;color:#eee">Description</div>
    <svg class="abs" style="left:432px;top:320px" width="28" height="40" viewBox="0 0 28 40" fill="none" stroke="#dcdcdc" stroke-width="1.5" stroke-linecap="round" stroke-linejoin="round"><path d="M9.6 23.9V28.4H18.4V23.9C21.2 22.4 22.9 19.5 22.9 16.3C22.9 11.5 18.9 7.7 14 7.7C9.1 7.7 5.1 11.5 5.1 16.3C5.1 19.5 6.8 22.4 9.6 23.9Z"/><path d="M10.6 33.2H17.4"/></svg>
    <div class="t" style="left:19px;top:376.8px;font-size:16.5px;font-weight:700;letter-spacing:.2px;color:#e2e2e2">Recommended prompt formula</div>
    <svg class="abs" style="left:278px;top:376px" width="16" height="16" viewBox="0 0 16 16" fill="none" stroke="#d8d8d8" stroke-width="1.2" stroke-linecap="round"><circle cx="8" cy="8" r="6.3"/><path d="M8 7.3V11.2M8 4.9V5"/></svg>
    <div class="t med" style="left:19.5px;top:406.9px;font-size:17px;letter-spacing:.18px;color:#ebebeb">[Main Subject] , [Context &amp; Key Features] ,</div>
    <div class="t med" style="left:19.5px;top:437.6px;font-size:17px;letter-spacing:.21px;color:#ebebeb">[Atmosphere &amp; Lighting] , [Style] , [Extra Keywords]</div>
    <div class="abs" style="left:19.5px;top:470px;width:445.5px;height:137px;background:#333;border:1px solid #444;border-radius:6px;overflow:hidden">
      <div class="t ta" style="top:11.6px;letter-spacing:.49px">Generate a photorealistic render of your</div>
      <div class="t ta" style="top:42.3px;letter-spacing:.64px">model with brutalist concrete textures, set</div>
      <div class="t ta" style="top:72.8px;letter-spacing:.5px">in a rugged, rocky landscape under a soft,</div>
      <div class="t ta" style="top:103.1px;letter-spacing:.65px">overcast sky, following the style and</div>
      <div class="abs" style="left:431px;top:5px;width:8px;height:88px;border-radius:4px;background:#8b8b8b"></div>
      <div class="abs" style="left:426px;top:118px;width:20px;height:20px;border-left:1.5px solid #e6e6e6;border-top:1.5px solid #e6e6e6;background:#333"></div>
      <svg class="abs" style="left:434px;top:124px" width="10" height="10" viewBox="0 0 10 10" stroke="#cfcfcf" stroke-width="1.2" fill="none"><path d="M2 9L9 2M6 9L9 6"/></svg>
    </div>
    <div class="abs" style="left:18.9px;top:625px;width:181.6px;height:30.5px;border-radius:6px;background:#444"></div>
    <svg class="abs" style="left:28px;top:630px" width="22" height="20" viewBox="0 0 22 20" fill="none" stroke="#ededed" stroke-width="1.5" stroke-linecap="butt"><path d="M2.2 6.6H11.2M2.2 10.8H13.4M2.2 15H13.4"/><path d="M15.4 1.8C15.8 4.4 16.6 5.2 19.2 5.6C16.6 6 15.8 6.8 15.4 9.4C15 6.8 14.2 6 11.6 5.6C14.2 5.2 15 4.4 15.4 1.8Z" fill="#ededed" stroke="none"/></svg>
    <div class="t med" style="left:55px;top:633.9px;font-size:17.6px;letter-spacing:.27px;color:#efefef">Enhance prompt</div>
    <div class="hr" style="left:16.4px;top:677.3px;width:450.8px"></div>
    <div class="abs" style="left:16.5px;top:701px;width:451px;height:37px;border-radius:6px;background:#fcc6f8"></div>
    <div class="t" style="left:16.5px;width:451px;text-align:center;top:710.1px;font-size:20px;letter-spacing:.2px;color:#2e2a2e;-webkit-text-stroke:.3px #2e2a2e">Generate</div>
  </div>

  <svg class="abs" style="left:0;top:0" width="1856" height="818" viewBox="45 40 1856 818" fill="none" stroke="#fff" stroke-width="4.2" stroke-linecap="round" stroke-linejoin="round">
    <path d="M1367 366 L1824.5 422.5 M1813.6 413.8 L1825 422.6 L1812 430"/>
    <path d="M1209.5 741.3 L1398 733.7 M1387 725.2 L1398.6 733.7 L1387.4 742.8"/>
  </svg>
  <div class="note" style="left:1181.2px;top:256.1px;width:140.8px;height:91.8px;padding-top:4.4px">Click this to<br>see prompt<br>ideas</div>
  <div class="note" style="left:1024.8px;top:656px;width:139.6px;height:90.8px;padding-top:17px">Prompt<br>Enhancer</div>

</div>
</body>
</html>
